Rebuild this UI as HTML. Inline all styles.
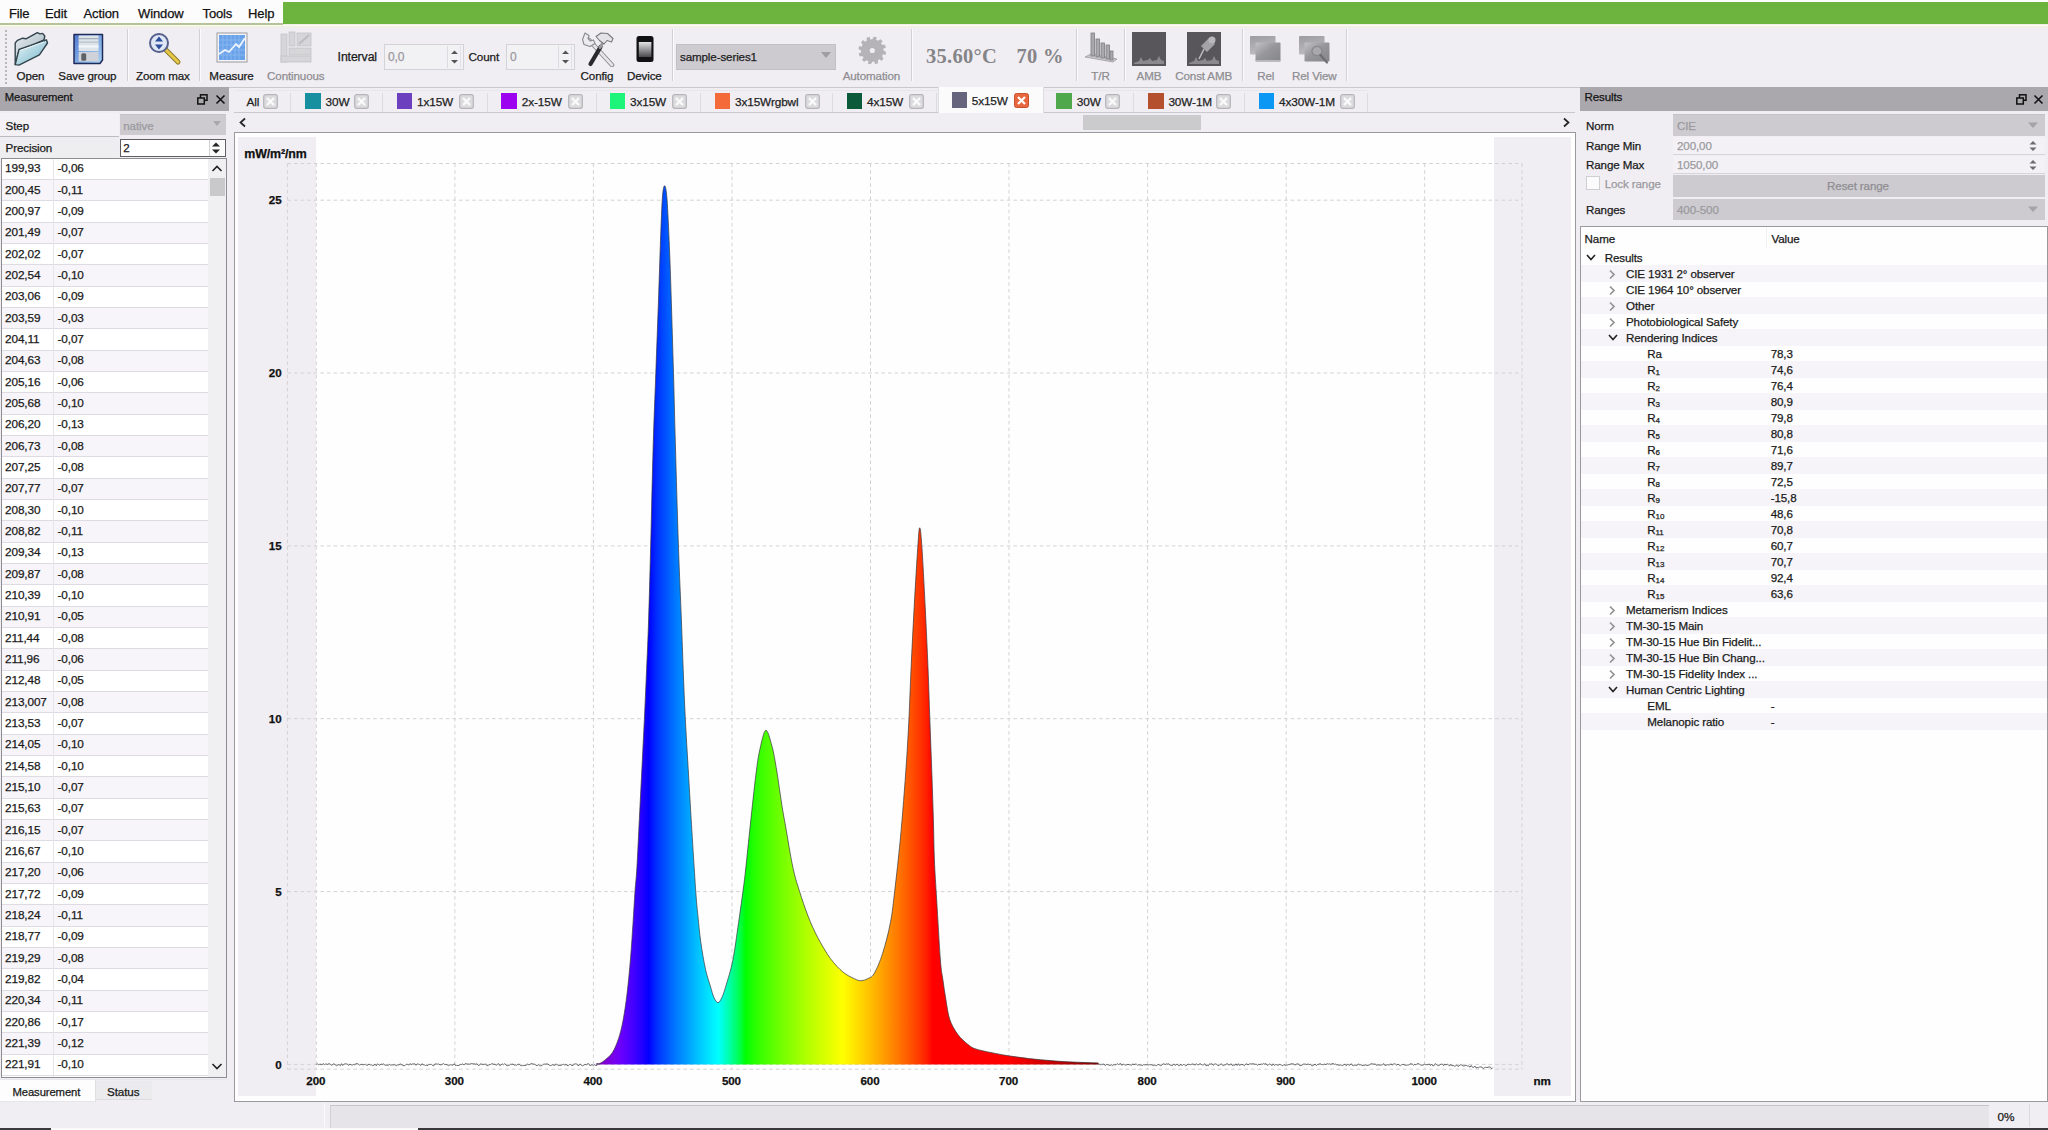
<!DOCTYPE html><html><head><meta charset="utf-8"><style>
*{box-sizing:border-box}
body{margin:0;width:2048px;height:1130px;overflow:hidden;position:relative;background:#f0eef3;font-family:"Liberation Sans",sans-serif;font-size:12px;color:#1a1a1a}
.a{position:absolute}
.t{position:absolute;white-space:nowrap;line-height:1;-webkit-text-stroke:0.25px currentColor;letter-spacing:-0.12px}
.g{color:#8a898c}
</style></head><body>

<div class="a" style="left:0px;top:0px;width:2048px;height:23px;background:#fcfcfc"></div>
<div class="a" style="left:0px;top:23px;width:283px;height:1.5px;background:#b4c39a"></div>
<div class="a" style="left:283px;top:2px;width:1765px;height:22.3px;background:#6db43e"></div>
<div class="a" style="left:0px;top:24.5px;width:2048px;height:1.5px;background:#fbfbe6"></div>
<div class="a" style="left:0px;top:26px;width:2048px;height:2px;background:#f1f0e8"></div>
<div class="t" style="left:9px;top:6.5px;font-size:13px;color:#111">File</div>
<div class="t" style="left:45px;top:6.5px;font-size:13px;color:#111">Edit</div>
<div class="t" style="left:83.5px;top:6.5px;font-size:13px;color:#111">Action</div>
<div class="t" style="left:138px;top:6.5px;font-size:13px;color:#111">Window</div>
<div class="t" style="left:202.5px;top:6.5px;font-size:13px;color:#111">Tools</div>
<div class="t" style="left:248px;top:6.5px;font-size:13px;color:#111">Help</div>
<div class="a" style="left:0px;top:87px;width:2048px;height:1px;background:#c9c8cb"></div>
<div class="a" style="left:127px;top:29px;width:1px;height:52px;background:#d3d1d6"></div>
<div class="a" style="left:128px;top:29px;width:1px;height:52px;background:#fbfafc"></div>
<div class="a" style="left:199px;top:29px;width:1px;height:52px;background:#d3d1d6"></div>
<div class="a" style="left:200px;top:29px;width:1px;height:52px;background:#fbfafc"></div>
<div class="a" style="left:672px;top:29px;width:1px;height:52px;background:#d3d1d6"></div>
<div class="a" style="left:673px;top:29px;width:1px;height:52px;background:#fbfafc"></div>
<div class="a" style="left:911px;top:29px;width:1px;height:52px;background:#d3d1d6"></div>
<div class="a" style="left:912px;top:29px;width:1px;height:52px;background:#fbfafc"></div>
<div class="a" style="left:1076px;top:29px;width:1px;height:52px;background:#d3d1d6"></div>
<div class="a" style="left:1077px;top:29px;width:1px;height:52px;background:#fbfafc"></div>
<div class="a" style="left:1124px;top:29px;width:1px;height:52px;background:#d3d1d6"></div>
<div class="a" style="left:1125px;top:29px;width:1px;height:52px;background:#fbfafc"></div>
<div class="a" style="left:1242px;top:29px;width:1px;height:52px;background:#d3d1d6"></div>
<div class="a" style="left:1243px;top:29px;width:1px;height:52px;background:#fbfafc"></div>
<div class="a" style="left:1346px;top:29px;width:1px;height:52px;background:#d3d1d6"></div>
<div class="a" style="left:1347px;top:29px;width:1px;height:52px;background:#fbfafc"></div>
<div class="a" style="left:5px;top:30px;width:1.5px;height:2px;background:#b8b7ba"></div>
<div class="a" style="left:5px;top:34px;width:1.5px;height:2px;background:#b8b7ba"></div>
<div class="a" style="left:5px;top:38px;width:1.5px;height:2px;background:#b8b7ba"></div>
<div class="a" style="left:5px;top:42px;width:1.5px;height:2px;background:#b8b7ba"></div>
<div class="a" style="left:5px;top:46px;width:1.5px;height:2px;background:#b8b7ba"></div>
<div class="a" style="left:5px;top:50px;width:1.5px;height:2px;background:#b8b7ba"></div>
<div class="a" style="left:5px;top:54px;width:1.5px;height:2px;background:#b8b7ba"></div>
<div class="a" style="left:5px;top:58px;width:1.5px;height:2px;background:#b8b7ba"></div>
<div class="a" style="left:5px;top:62px;width:1.5px;height:2px;background:#b8b7ba"></div>
<div class="a" style="left:5px;top:66px;width:1.5px;height:2px;background:#b8b7ba"></div>
<div class="a" style="left:5px;top:70px;width:1.5px;height:2px;background:#b8b7ba"></div>
<div class="a" style="left:5px;top:74px;width:1.5px;height:2px;background:#b8b7ba"></div>
<div class="a" style="left:5px;top:78px;width:1.5px;height:2px;background:#b8b7ba"></div>
<div class="a" style="left:5px;top:82px;width:1.5px;height:2px;background:#b8b7ba"></div>
<svg class="a" style="left:13px;top:31px" width="38" height="37" viewBox="0 0 38 37"><defs><linearGradient id="fb" x1="0" y1="0" x2="1" y2="1"><stop offset="0" stop-color="#e4ebef"/><stop offset="1" stop-color="#9fb2bb"/></linearGradient>
<linearGradient id="ff" x1="0" y1="0" x2="1" y2="1"><stop offset="0" stop-color="#f2f8fa"/><stop offset="0.55" stop-color="#a9d3df"/><stop offset="1" stop-color="#7fb0c2"/></linearGradient></defs>
<path d="M2.2 33.6 L2.2 12 L4.4 9.4 L9.7 7.2 L13 7.8 L24.3 1.6 L27 2.9 L29.6 2.4 L31.8 5 L31 9 L20 14 L6 20 Z" fill="url(#fb)" stroke="#34444c" stroke-width="1.4" stroke-linejoin="round"/>
<path d="M2.2 33.6 L6 18.5 L33.4 8.8 L34.5 12 L26.4 23.9 L6 34.1 Z" fill="url(#ff)" stroke="#34444c" stroke-width="1.4" stroke-linejoin="round"/>
<path d="M7 19.5 L31 11" stroke="#ffffff" stroke-width="1" opacity="0.8"/></svg>
<div class="t" style="left:30.5px;top:69.78px;font-size:11.6px;transform:translateX(-50%);">Open</div>
<svg class="a" style="left:73px;top:33px" width="32" height="32" viewBox="0 0 32 32"><defs><linearGradient id="fl" x1="0" y1="0" x2="1" y2="1"><stop offset="0" stop-color="#4f78d0"/><stop offset="1" stop-color="#a9d4f5"/></linearGradient></defs>
<path d="M1 1.5 H29.5 V27 L27 30.5 H1 Z" fill="url(#fl)" stroke="#1f2c5a" stroke-width="1.5" stroke-linejoin="round"/>
<rect x="5.7" y="2.5" width="19.8" height="15.5" fill="#dde5ea"/><rect x="5.7" y="5" width="19.8" height="1.3" fill="#a3b0b8"/><rect x="5.7" y="8.5" width="19.8" height="1.3" fill="#b9c4cb"/><rect x="5.7" y="12.5" width="19.8" height="2" fill="#f4f8fb"/>
<rect x="5.7" y="18.9" width="19.8" height="9.5" fill="#cfd3d9"/><rect x="8.3" y="20.3" width="4.9" height="7.5" rx="1.5" fill="#5e6166"/></svg>
<div class="t" style="left:87.4px;top:69.78px;font-size:11.6px;transform:translateX(-50%);">Save group</div>
<svg class="a" style="left:148px;top:32px" width="34" height="34" viewBox="0 0 34 34"><line x1="18" y1="18" x2="30" y2="30" stroke="#8a7a2a" stroke-width="5" stroke-linecap="round"/><line x1="18" y1="18" x2="30" y2="30" stroke="#e8c84a" stroke-width="3" stroke-linecap="round"/>
<circle cx="11" cy="11" r="9" fill="#dfe6f5" stroke="#55608a" stroke-width="2"/><path d="M11 4.5 L15 9.5 H7 Z M11 17.5 L15 12.5 H7 Z" fill="#2b4c9a"/></svg>
<div class="t" style="left:162.9px;top:69.78px;font-size:11.6px;transform:translateX(-50%);">Zoom max</div>
<svg class="a" style="left:216px;top:32px" width="32" height="32" viewBox="0 0 32 32"><rect x="1" y="1" width="30" height="29" fill="#f4f4f6" stroke="#9a9aa0"/><rect x="3" y="3" width="26" height="25" fill="#6aa2ea"/>
<g stroke="#8dbaf0" stroke-width="0.8"><path d="M7 3V28M11 3V28M15 3V28M19 3V28M23 3V28M3 8H29M3 13H29M3 18H29M3 23H29"/></g>
<path d="M3 22 L9 18 L13 20 L20 12 L23 15 L29 6" fill="none" stroke="#eef4ff" stroke-width="1.8"/></svg>
<div class="t" style="left:231.5px;top:69.78px;font-size:11.6px;transform:translateX(-50%);">Measure</div>
<svg class="a" style="left:279px;top:30px" width="36" height="34" viewBox="0 0 36 34"><g fill="#d6d5d8" stroke="#c4c3c6" stroke-width="0.8"><rect x="2" y="4" width="6" height="28"/><rect x="10" y="2" width="6" height="14"/><rect x="18" y="3" width="14" height="13"/><rect x="10" y="18" width="22" height="7"/><rect x="2" y="26" width="30" height="6"/></g>
<path d="M20 14 L30 5" stroke="#bdbcbf" stroke-width="2"/></svg>
<div class="t" style="left:295.8px;top:69.78px;font-size:11.6px;transform:translateX(-50%);color:#8e8d91">Continuous</div>
<div class="t" style="left:337.6px;top:50.59px;font-size:12.3px;">Interval</div>
<div class="a" style="left:384px;top:43.5px;width:80px;height:26px;background:#f2f1f4;border:1px solid #d3d2d6"></div>
<div class="a" style="left:447px;top:45.5px;width:14px;height:22px;border-left:1px solid #dcdbdf;border-right:1px solid #e2e1e5"></div>
<svg class="a" style="left:450px;top:47.5px" width="9" height="18" viewBox="0 0 9 18"><path d="M4.5 2.5 L8 6 H1 Z M4.5 15.5 L8 12 H1 Z" fill="#555"/></svg>
<div class="t" style="left:388px;top:50.64px;font-size:12px;color:#9a999d">0,0</div>
<div class="t" style="left:468.5px;top:51.10px;font-size:11.7px;">Count</div>
<div class="a" style="left:506px;top:43.5px;width:69px;height:26px;background:#f2f1f4;border:1px solid #d3d2d6"></div>
<div class="a" style="left:558px;top:45.5px;width:14px;height:22px;border-left:1px solid #dcdbdf;border-right:1px solid #e2e1e5"></div>
<svg class="a" style="left:561px;top:47.5px" width="9" height="18" viewBox="0 0 9 18"><path d="M4.5 2.5 L8 6 H1 Z M4.5 15.5 L8 12 H1 Z" fill="#555"/></svg>
<div class="t" style="left:510px;top:50.64px;font-size:12px;color:#9a999d">0</div>
<svg class="a" style="left:580px;top:31px" width="37" height="36" viewBox="0 0 37 36"><path d="M9 9 L32 34" stroke="#8e8e92" stroke-width="4.6" stroke-linecap="round"/><path d="M9 9 L32 34" stroke="#e6e6e8" stroke-width="2.6" stroke-linecap="round"/>
<path d="M2.5 8.5 L5 2 L9 4.5 L8 7.5 L10.5 10 L13.5 9 L15 12.5 L10 15.5 L4 13.5 Z" fill="#ececee" stroke="#8a8a8e" stroke-width="1.1" stroke-linejoin="round"/>
<path d="M20.5 16 L10.5 33" stroke="#2a2a2c" stroke-width="4.2" stroke-linecap="round"/><path d="M24 10 L20 16.5" stroke="#9a9a9e" stroke-width="3" stroke-linecap="round"/>
<path d="M16 5.5 L21 2 L27.5 2.5 L33 7.5 L31.5 11 L27 9.5 L24 13 L19.5 9.5 Z" fill="#e4e4e6" stroke="#7a7a7e" stroke-width="1.1" stroke-linejoin="round"/></svg>
<div class="t" style="left:597px;top:69.78px;font-size:11.6px;transform:translateX(-50%);">Config</div>
<svg class="a" style="left:636px;top:35px" width="19" height="28" viewBox="0 0 19 28"><defs><linearGradient id="ph" x1="0" y1="0" x2="0" y2="1"><stop offset="0" stop-color="#e2e2e4"/><stop offset="1" stop-color="#4a4a4e"/></linearGradient></defs><rect x="0.5" y="1" width="17" height="26" rx="2.5" fill="#111113"/><rect x="2.8" y="7" width="12.6" height="15" fill="url(#ph)"/></svg>
<div class="t" style="left:644.3px;top:69.78px;font-size:11.6px;transform:translateX(-50%);">Device</div>
<div class="a" style="left:676px;top:43.5px;width:160px;height:26px;background:#cdcbd0;border:1px solid #c1c0c3"></div>
<div class="t" style="left:680px;top:51.18px;font-size:11.6px;color:#222">sample-series1</div>
<svg class="a" style="left:820px;top:50px" width="12" height="10" viewBox="0 0 12 10"><path d="M1 2 L11 2 L6 8 Z" fill="#9e9da1"/></svg>
<svg class="a" style="left:857px;top:35px" width="31" height="31" viewBox="0 0 31 31"><polygon points="26.60,15.50 29.12,16.95 28.47,19.93 25.93,19.33 25.09,21.15 26.55,23.67 24.49,25.93 22.59,24.13 20.95,25.29 20.95,28.20 18.05,29.13 17.30,26.62 15.30,26.80 13.85,29.32 10.87,28.67 11.47,26.13 9.65,25.29 7.13,26.75 4.87,24.69 6.67,22.79 5.51,21.15 2.60,21.15 1.67,18.25 4.18,17.50 4.00,15.50 1.48,14.05 2.13,11.07 4.67,11.67 5.51,9.85 4.05,7.33 6.11,5.07 8.01,6.87 9.65,5.71 9.65,2.80 12.55,1.87 13.30,4.38 15.30,4.20 16.75,1.68 19.73,2.33 19.13,4.87 20.95,5.71 23.47,4.25 25.73,6.31 23.93,8.21 25.09,9.85 28.00,9.85 28.93,12.75 26.42,13.50" fill="#b5b3b8"/><circle cx="15.3" cy="15.5" r="2.6" fill="#f0eef3"/></svg>
<div class="t" style="left:871.4px;top:69.78px;font-size:11.6px;transform:translateX(-50%);color:#8e8d91">Automation</div>
<div class="t" style="left:926px;top:45.95px;font-size:20.5px;font-family:'Liberation Serif',serif;font-weight:bold;color:#858488;-webkit-text-stroke:0;letter-spacing:0.3px">35.60°C</div>
<div class="t" style="left:1016.5px;top:45.95px;font-size:20.5px;font-family:'Liberation Serif',serif;font-weight:bold;color:#858488;-webkit-text-stroke:0;letter-spacing:0.3px">70 %</div>
<svg class="a" style="left:1083px;top:31px" width="35" height="34" viewBox="0 0 35 34"><path d="M2 26 L30 31 L34 28 L8 23 Z" fill="#c9c8cb" stroke="#9c9b9e" stroke-width="0.8"/>
<g fill="#a9a8ab" stroke="#7d7c80" stroke-width="0.8"><rect x="8" y="2" width="3.5" height="23"/><rect x="13" y="8" width="3.5" height="18"/><rect x="18" y="12" width="3.5" height="15"/><rect x="23" y="14" width="3.5" height="14"/><rect x="27" y="20" width="3" height="9"/></g></svg>
<div class="t" style="left:1100.5px;top:69.78px;font-size:11.6px;transform:translateX(-50%);color:#8e8d91">T/R</div>
<svg class="a" style="left:1132px;top:32px" width="34" height="34" viewBox="0 0 34 34"><rect x="0" y="0" width="34" height="34" fill="#58565b"/><path d="M2 31 L7 29 L9 25 L11 29 L16 28 L18 26 L20 29 L25 28 L27 24 L29 28 L32 29 L32 32 L2 32 Z" fill="#8b898e"/></svg>
<div class="t" style="left:1149px;top:69.78px;font-size:11.6px;transform:translateX(-50%);color:#8e8d91">AMB</div>
<svg class="a" style="left:1187px;top:32px" width="34" height="34" viewBox="0 0 34 34"><rect x="0" y="0" width="34" height="34" fill="#58565b"/><path d="M2 31 L7 29 L9 25 L11 29 L16 28 L18 26 L20 29 L25 28 L27 24 L29 28 L32 29 L32 32 L2 32 Z" fill="#8b898e"/>
<path d="M12 27 L17 17" stroke="#bcbbbe" stroke-width="1.6"/><path d="M14 14 L22 6 L28 12 L20 20 Z" fill="#a3a2a6"/><circle cx="25" cy="8" r="3.5" fill="#b8b7ba"/></svg>
<div class="t" style="left:1203.7px;top:69.78px;font-size:11.6px;transform:translateX(-50%);color:#8e8d91">Const AMB</div>
<svg class="a" style="left:1249px;top:35px" width="33" height="29" viewBox="0 0 33 29"><defs><linearGradient id="rb" x1="0" y1="0" x2="0.3" y2="1"><stop offset="0" stop-color="#9c9b9f"/><stop offset="1" stop-color="#bcbbbf"/></linearGradient><linearGradient id="rf" x1="0" y1="0" x2="1" y2="1"><stop offset="0" stop-color="#c4c3c7"/><stop offset="0.45" stop-color="#98979b"/><stop offset="1" stop-color="#858488"/></linearGradient></defs><rect x="1" y="1" width="25.5" height="18.5" rx="1" fill="url(#rb)"/><rect x="6.5" y="7.5" width="25" height="19" rx="1" fill="url(#rf)"/><rect x="6.5" y="25" width="25" height="1.5" fill="#b9b8bc"/></svg>
<div class="t" style="left:1265.8px;top:69.78px;font-size:11.6px;transform:translateX(-50%);color:#8e8d91">Rel</div>
<svg class="a" style="left:1298px;top:35px" width="33" height="32" viewBox="0 0 33 32"><rect x="1" y="1" width="25.5" height="18.5" rx="1" fill="url(#rb)"/><rect x="6.5" y="7.5" width="25" height="19" rx="1" fill="url(#rf)"/><ellipse cx="19" cy="16" rx="5" ry="4.6" fill="#a9a8ac" stroke="#8a898d" stroke-width="1.3"/><path d="M22.5 20 L29 27.5" stroke="#6e6d71" stroke-width="2.2" stroke-linecap="round"/></svg>
<div class="t" style="left:1314.3px;top:69.78px;font-size:11.6px;transform:translateX(-50%);color:#8e8d91">Rel View</div>
<div class="a" style="left:0px;top:87px;width:229px;height:23.5px;background:#a9a7ac"></div>
<div class="t" style="left:4.8px;top:91.63px;font-size:11.3px;color:#151515">Measurement</div>
<svg class="a" style="left:197px;top:93.5px" width="11" height="11" viewBox="0 0 11 11"><rect x="3.5" y="0.8" width="6.5" height="5.5" fill="none" stroke="#111" stroke-width="1.5"/><rect x="0.8" y="4" width="6.5" height="6" fill="#aaa9ac" stroke="#111" stroke-width="1.5"/></svg>
<svg class="a" style="left:214.5px;top:93.5px" width="11" height="11" viewBox="0 0 11 11"><path d="M1.5 1.5 L9.5 9.5 M9.5 1.5 L1.5 9.5" stroke="#111" stroke-width="1.6"/></svg>
<div class="a" style="left:0px;top:112.5px;width:119px;height:24px;background:#f3f1f5;border-bottom:1.5px solid #bcbbbf"></div>
<div class="a" style="left:0px;top:136.5px;width:119px;height:21px;background:#eeedf0"></div>
<div class="t" style="left:5.6px;top:119.98px;font-size:11.6px;">Step</div>
<div class="a" style="left:119.6px;top:114.3px;width:106.5px;height:21.2px;background:#cdcbd0;border-top:1px solid #c4c2c8"></div>
<div class="t" style="left:123.3px;top:119.98px;font-size:11.6px;color:#9b9a9e">native</div>
<svg class="a" style="left:212px;top:120px" width="10" height="8" viewBox="0 0 10 8"><path d="M1 1 L9 1 L5 6 Z" fill="#a8a7aa"/></svg>
<div class="t" style="left:5.6px;top:141.98px;font-size:11.6px;">Precision</div>
<div class="a" style="left:119.6px;top:138.5px;width:106px;height:18.5px;background:#fff;border:1px solid #5f5e62"></div>
<div class="a" style="left:208.5px;top:140px;width:15.5px;height:15.5px;border-left:1px solid #d0cfd3;background:#fafafa"></div>
<svg class="a" style="left:210px;top:140px" width="12" height="16" viewBox="0 0 12 16"><path d="M6 2.5 L10 6.5 H2 Z M6 13.5 L10 9.5 H2 Z" fill="#222"/></svg>
<div class="t" style="left:123.3px;top:142.18px;font-size:11.6px;">2</div>
<div class="a" style="left:1px;top:158.3px;width:226px;height:920px;background:#fff;border:1px solid #8d8c90"></div>
<div class="a" style="left:2px;top:158.7px;width:206px;height:21.333px;background:#ffffff;border-bottom:1px solid #dedce2"></div>
<div class="t" style="left:5px;top:163.31px;font-size:11.8px;">199,93</div>
<div class="t" style="left:57.5px;top:163.31px;font-size:11.8px;">-0,06</div>
<div class="a" style="left:2px;top:180.033px;width:206px;height:21.333px;background:#f7f5f9;border-bottom:1px solid #dedce2"></div>
<div class="t" style="left:5px;top:184.64px;font-size:11.8px;">200,45</div>
<div class="t" style="left:57.5px;top:184.64px;font-size:11.8px;">-0,11</div>
<div class="a" style="left:2px;top:201.36599999999999px;width:206px;height:21.333px;background:#ffffff;border-bottom:1px solid #dedce2"></div>
<div class="t" style="left:5px;top:205.98px;font-size:11.8px;">200,97</div>
<div class="t" style="left:57.5px;top:205.98px;font-size:11.8px;">-0,09</div>
<div class="a" style="left:2px;top:222.69899999999998px;width:206px;height:21.333px;background:#f7f5f9;border-bottom:1px solid #dedce2"></div>
<div class="t" style="left:5px;top:227.31px;font-size:11.8px;">201,49</div>
<div class="t" style="left:57.5px;top:227.31px;font-size:11.8px;">-0,07</div>
<div class="a" style="left:2px;top:244.03199999999998px;width:206px;height:21.333px;background:#ffffff;border-bottom:1px solid #dedce2"></div>
<div class="t" style="left:5px;top:248.64px;font-size:11.8px;">202,02</div>
<div class="t" style="left:57.5px;top:248.64px;font-size:11.8px;">-0,07</div>
<div class="a" style="left:2px;top:265.365px;width:206px;height:21.333px;background:#f7f5f9;border-bottom:1px solid #dedce2"></div>
<div class="t" style="left:5px;top:269.98px;font-size:11.8px;">202,54</div>
<div class="t" style="left:57.5px;top:269.98px;font-size:11.8px;">-0,10</div>
<div class="a" style="left:2px;top:286.698px;width:206px;height:21.333px;background:#ffffff;border-bottom:1px solid #dedce2"></div>
<div class="t" style="left:5px;top:291.31px;font-size:11.8px;">203,06</div>
<div class="t" style="left:57.5px;top:291.31px;font-size:11.8px;">-0,09</div>
<div class="a" style="left:2px;top:308.03099999999995px;width:206px;height:21.333px;background:#f7f5f9;border-bottom:1px solid #dedce2"></div>
<div class="t" style="left:5px;top:312.64px;font-size:11.8px;">203,59</div>
<div class="t" style="left:57.5px;top:312.64px;font-size:11.8px;">-0,03</div>
<div class="a" style="left:2px;top:329.364px;width:206px;height:21.333px;background:#ffffff;border-bottom:1px solid #dedce2"></div>
<div class="t" style="left:5px;top:333.98px;font-size:11.8px;">204,11</div>
<div class="t" style="left:57.5px;top:333.98px;font-size:11.8px;">-0,07</div>
<div class="a" style="left:2px;top:350.697px;width:206px;height:21.333px;background:#f7f5f9;border-bottom:1px solid #dedce2"></div>
<div class="t" style="left:5px;top:355.31px;font-size:11.8px;">204,63</div>
<div class="t" style="left:57.5px;top:355.31px;font-size:11.8px;">-0,08</div>
<div class="a" style="left:2px;top:372.03px;width:206px;height:21.333px;background:#ffffff;border-bottom:1px solid #dedce2"></div>
<div class="t" style="left:5px;top:376.64px;font-size:11.8px;">205,16</div>
<div class="t" style="left:57.5px;top:376.64px;font-size:11.8px;">-0,06</div>
<div class="a" style="left:2px;top:393.36299999999994px;width:206px;height:21.333px;background:#f7f5f9;border-bottom:1px solid #dedce2"></div>
<div class="t" style="left:5px;top:397.97px;font-size:11.8px;">205,68</div>
<div class="t" style="left:57.5px;top:397.97px;font-size:11.8px;">-0,10</div>
<div class="a" style="left:2px;top:414.69599999999997px;width:206px;height:21.333px;background:#ffffff;border-bottom:1px solid #dedce2"></div>
<div class="t" style="left:5px;top:419.31px;font-size:11.8px;">206,20</div>
<div class="t" style="left:57.5px;top:419.31px;font-size:11.8px;">-0,13</div>
<div class="a" style="left:2px;top:436.02899999999994px;width:206px;height:21.333px;background:#f7f5f9;border-bottom:1px solid #dedce2"></div>
<div class="t" style="left:5px;top:440.64px;font-size:11.8px;">206,73</div>
<div class="t" style="left:57.5px;top:440.64px;font-size:11.8px;">-0,08</div>
<div class="a" style="left:2px;top:457.36199999999997px;width:206px;height:21.333px;background:#ffffff;border-bottom:1px solid #dedce2"></div>
<div class="t" style="left:5px;top:461.97px;font-size:11.8px;">207,25</div>
<div class="t" style="left:57.5px;top:461.97px;font-size:11.8px;">-0,08</div>
<div class="a" style="left:2px;top:478.695px;width:206px;height:21.333px;background:#f7f5f9;border-bottom:1px solid #dedce2"></div>
<div class="t" style="left:5px;top:483.31px;font-size:11.8px;">207,77</div>
<div class="t" style="left:57.5px;top:483.31px;font-size:11.8px;">-0,07</div>
<div class="a" style="left:2px;top:500.02799999999996px;width:206px;height:21.333px;background:#ffffff;border-bottom:1px solid #dedce2"></div>
<div class="t" style="left:5px;top:504.64px;font-size:11.8px;">208,30</div>
<div class="t" style="left:57.5px;top:504.64px;font-size:11.8px;">-0,10</div>
<div class="a" style="left:2px;top:521.3609999999999px;width:206px;height:21.333px;background:#f7f5f9;border-bottom:1px solid #dedce2"></div>
<div class="t" style="left:5px;top:525.97px;font-size:11.8px;">208,82</div>
<div class="t" style="left:57.5px;top:525.97px;font-size:11.8px;">-0,11</div>
<div class="a" style="left:2px;top:542.694px;width:206px;height:21.333px;background:#ffffff;border-bottom:1px solid #dedce2"></div>
<div class="t" style="left:5px;top:547.31px;font-size:11.8px;">209,34</div>
<div class="t" style="left:57.5px;top:547.31px;font-size:11.8px;">-0,13</div>
<div class="a" style="left:2px;top:564.027px;width:206px;height:21.333px;background:#f7f5f9;border-bottom:1px solid #dedce2"></div>
<div class="t" style="left:5px;top:568.64px;font-size:11.8px;">209,87</div>
<div class="t" style="left:57.5px;top:568.64px;font-size:11.8px;">-0,08</div>
<div class="a" style="left:2px;top:585.3599999999999px;width:206px;height:21.333px;background:#ffffff;border-bottom:1px solid #dedce2"></div>
<div class="t" style="left:5px;top:589.97px;font-size:11.8px;">210,39</div>
<div class="t" style="left:57.5px;top:589.97px;font-size:11.8px;">-0,10</div>
<div class="a" style="left:2px;top:606.693px;width:206px;height:21.333px;background:#f7f5f9;border-bottom:1px solid #dedce2"></div>
<div class="t" style="left:5px;top:611.30px;font-size:11.8px;">210,91</div>
<div class="t" style="left:57.5px;top:611.30px;font-size:11.8px;">-0,05</div>
<div class="a" style="left:2px;top:628.026px;width:206px;height:21.333px;background:#ffffff;border-bottom:1px solid #dedce2"></div>
<div class="t" style="left:5px;top:632.64px;font-size:11.8px;">211,44</div>
<div class="t" style="left:57.5px;top:632.64px;font-size:11.8px;">-0,08</div>
<div class="a" style="left:2px;top:649.3589999999999px;width:206px;height:21.333px;background:#f7f5f9;border-bottom:1px solid #dedce2"></div>
<div class="t" style="left:5px;top:653.97px;font-size:11.8px;">211,96</div>
<div class="t" style="left:57.5px;top:653.97px;font-size:11.8px;">-0,06</div>
<div class="a" style="left:2px;top:670.692px;width:206px;height:21.333px;background:#ffffff;border-bottom:1px solid #dedce2"></div>
<div class="t" style="left:5px;top:675.30px;font-size:11.8px;">212,48</div>
<div class="t" style="left:57.5px;top:675.30px;font-size:11.8px;">-0,05</div>
<div class="a" style="left:2px;top:692.0249999999999px;width:206px;height:21.333px;background:#f7f5f9;border-bottom:1px solid #dedce2"></div>
<div class="t" style="left:5px;top:696.64px;font-size:11.8px;">213,007</div>
<div class="t" style="left:57.5px;top:696.64px;font-size:11.8px;">-0,08</div>
<div class="a" style="left:2px;top:713.358px;width:206px;height:21.333px;background:#ffffff;border-bottom:1px solid #dedce2"></div>
<div class="t" style="left:5px;top:717.97px;font-size:11.8px;">213,53</div>
<div class="t" style="left:57.5px;top:717.97px;font-size:11.8px;">-0,07</div>
<div class="a" style="left:2px;top:734.691px;width:206px;height:21.333px;background:#f7f5f9;border-bottom:1px solid #dedce2"></div>
<div class="t" style="left:5px;top:739.30px;font-size:11.8px;">214,05</div>
<div class="t" style="left:57.5px;top:739.30px;font-size:11.8px;">-0,10</div>
<div class="a" style="left:2px;top:756.0239999999999px;width:206px;height:21.333px;background:#ffffff;border-bottom:1px solid #dedce2"></div>
<div class="t" style="left:5px;top:760.64px;font-size:11.8px;">214,58</div>
<div class="t" style="left:57.5px;top:760.64px;font-size:11.8px;">-0,10</div>
<div class="a" style="left:2px;top:777.357px;width:206px;height:21.333px;background:#f7f5f9;border-bottom:1px solid #dedce2"></div>
<div class="t" style="left:5px;top:781.97px;font-size:11.8px;">215,10</div>
<div class="t" style="left:57.5px;top:781.97px;font-size:11.8px;">-0,07</div>
<div class="a" style="left:2px;top:798.69px;width:206px;height:21.333px;background:#ffffff;border-bottom:1px solid #dedce2"></div>
<div class="t" style="left:5px;top:803.30px;font-size:11.8px;">215,63</div>
<div class="t" style="left:57.5px;top:803.30px;font-size:11.8px;">-0,07</div>
<div class="a" style="left:2px;top:820.0229999999999px;width:206px;height:21.333px;background:#f7f5f9;border-bottom:1px solid #dedce2"></div>
<div class="t" style="left:5px;top:824.63px;font-size:11.8px;">216,15</div>
<div class="t" style="left:57.5px;top:824.63px;font-size:11.8px;">-0,07</div>
<div class="a" style="left:2px;top:841.356px;width:206px;height:21.333px;background:#ffffff;border-bottom:1px solid #dedce2"></div>
<div class="t" style="left:5px;top:845.97px;font-size:11.8px;">216,67</div>
<div class="t" style="left:57.5px;top:845.97px;font-size:11.8px;">-0,10</div>
<div class="a" style="left:2px;top:862.6889999999999px;width:206px;height:21.333px;background:#f7f5f9;border-bottom:1px solid #dedce2"></div>
<div class="t" style="left:5px;top:867.30px;font-size:11.8px;">217,20</div>
<div class="t" style="left:57.5px;top:867.30px;font-size:11.8px;">-0,06</div>
<div class="a" style="left:2px;top:884.0219999999999px;width:206px;height:21.333px;background:#ffffff;border-bottom:1px solid #dedce2"></div>
<div class="t" style="left:5px;top:888.63px;font-size:11.8px;">217,72</div>
<div class="t" style="left:57.5px;top:888.63px;font-size:11.8px;">-0,09</div>
<div class="a" style="left:2px;top:905.355px;width:206px;height:21.333px;background:#f7f5f9;border-bottom:1px solid #dedce2"></div>
<div class="t" style="left:5px;top:909.97px;font-size:11.8px;">218,24</div>
<div class="t" style="left:57.5px;top:909.97px;font-size:11.8px;">-0,11</div>
<div class="a" style="left:2px;top:926.6879999999999px;width:206px;height:21.333px;background:#ffffff;border-bottom:1px solid #dedce2"></div>
<div class="t" style="left:5px;top:931.30px;font-size:11.8px;">218,77</div>
<div class="t" style="left:57.5px;top:931.30px;font-size:11.8px;">-0,09</div>
<div class="a" style="left:2px;top:948.021px;width:206px;height:21.333px;background:#f7f5f9;border-bottom:1px solid #dedce2"></div>
<div class="t" style="left:5px;top:952.63px;font-size:11.8px;">219,29</div>
<div class="t" style="left:57.5px;top:952.63px;font-size:11.8px;">-0,08</div>
<div class="a" style="left:2px;top:969.354px;width:206px;height:21.333px;background:#ffffff;border-bottom:1px solid #dedce2"></div>
<div class="t" style="left:5px;top:973.97px;font-size:11.8px;">219,82</div>
<div class="t" style="left:57.5px;top:973.97px;font-size:11.8px;">-0,04</div>
<div class="a" style="left:2px;top:990.6869999999999px;width:206px;height:21.333px;background:#f7f5f9;border-bottom:1px solid #dedce2"></div>
<div class="t" style="left:5px;top:995.30px;font-size:11.8px;">220,34</div>
<div class="t" style="left:57.5px;top:995.30px;font-size:11.8px;">-0,11</div>
<div class="a" style="left:2px;top:1012.02px;width:206px;height:21.333px;background:#ffffff;border-bottom:1px solid #dedce2"></div>
<div class="t" style="left:5px;top:1016.63px;font-size:11.8px;">220,86</div>
<div class="t" style="left:57.5px;top:1016.63px;font-size:11.8px;">-0,17</div>
<div class="a" style="left:2px;top:1033.3529999999998px;width:206px;height:21.333px;background:#f7f5f9;border-bottom:1px solid #dedce2"></div>
<div class="t" style="left:5px;top:1037.96px;font-size:11.8px;">221,39</div>
<div class="t" style="left:57.5px;top:1037.96px;font-size:11.8px;">-0,12</div>
<div class="a" style="left:2px;top:1054.686px;width:206px;height:21.333px;background:#ffffff;border-bottom:1px solid #dedce2"></div>
<div class="t" style="left:5px;top:1059.30px;font-size:11.8px;">221,91</div>
<div class="t" style="left:57.5px;top:1059.30px;font-size:11.8px;">-0,10</div>
<div class="a" style="left:53px;top:159px;width:1px;height:918px;background:#e6e5e9"></div>
<div class="a" style="left:208px;top:159.3px;width:18px;height:918px;background:#f0eff2"></div>
<svg class="a" style="left:211px;top:164px" width="12" height="9" viewBox="0 0 12 9"><path d="M1.5 7 L6 2.5 L10.5 7" fill="none" stroke="#222" stroke-width="1.6"/></svg>
<div class="a" style="left:209.5px;top:177.5px;width:15px;height:18px;background:#c9c8cb"></div>
<svg class="a" style="left:211px;top:1062px" width="12" height="9" viewBox="0 0 12 9"><path d="M1.5 2 L6 6.5 L10.5 2" fill="none" stroke="#222" stroke-width="1.6"/></svg>
<div class="a" style="left:0px;top:1079.5px;width:96px;height:22px;background:#fdfdfd;border-right:1px solid #e0dfe3;border-bottom:1px solid #e6e5e9"></div>
<div class="t" style="left:12.5px;top:1086.73px;font-size:11.3px;">Measurement</div>
<div class="a" style="left:96px;top:1081px;width:56px;height:19px;background:#ebeaed;border-bottom:1px solid #dddce0"></div>
<div class="t" style="left:107px;top:1086.30px;font-size:11.7px;">Status</div>
<div class="a" style="left:0px;top:1078.5px;width:228px;height:1px;background:#e8e7eb"></div>
<div class="a" style="left:234px;top:90px;width:1134px;height:22.5px;background:#f0eef3;border-top:1px solid #e8e6eb"></div>
<div class="a" style="left:234px;top:112px;width:1341px;height:1px;background:#c9c8cc"></div>
<div class="a" style="left:290.3px;top:93px;width:1px;height:19px;background:#dcdbdf"></div>
<div class="t" style="left:246.4px;top:97.21px;font-size:11.8px;color:#222">All</div>
<svg class="a" style="left:262.6px;top:93.8px" width="15" height="15" viewBox="0 0 15 15"><rect x="0.7" y="0.7" width="13.6" height="13.6" rx="2" fill="#dcdbde" stroke="#b5b4b8" stroke-width="1.2"/><path d="M4 4 L11 11 M11 4 L4 11" stroke="#fbfbfb" stroke-width="2.2"/></svg>
<div class="a" style="left:382px;top:93px;width:1px;height:19px;background:#dcdbdf"></div>
<div class="a" style="left:305.0px;top:93px;width:15.8px;height:15.8px;background:#16909f"></div>
<div class="t" style="left:325.5px;top:97.21px;font-size:11.8px;color:#222">30W</div>
<svg class="a" style="left:354.4px;top:93.8px" width="15" height="15" viewBox="0 0 15 15"><rect x="0.7" y="0.7" width="13.6" height="13.6" rx="2" fill="#dcdbde" stroke="#b5b4b8" stroke-width="1.2"/><path d="M4 4 L11 11 M11 4 L4 11" stroke="#fbfbfb" stroke-width="2.2"/></svg>
<div class="a" style="left:486.6px;top:93px;width:1px;height:19px;background:#dcdbdf"></div>
<div class="a" style="left:396.5px;top:93px;width:15.8px;height:15.8px;background:#6b3fbd"></div>
<div class="t" style="left:417px;top:97.21px;font-size:11.8px;color:#222">1x15W</div>
<svg class="a" style="left:459px;top:93.8px" width="15" height="15" viewBox="0 0 15 15"><rect x="0.7" y="0.7" width="13.6" height="13.6" rx="2" fill="#dcdbde" stroke="#b5b4b8" stroke-width="1.2"/><path d="M4 4 L11 11 M11 4 L4 11" stroke="#fbfbfb" stroke-width="2.2"/></svg>
<div class="a" style="left:596px;top:93px;width:1px;height:19px;background:#dcdbdf"></div>
<div class="a" style="left:501.29999999999995px;top:93px;width:15.8px;height:15.8px;background:#9c00ef"></div>
<div class="t" style="left:521.8px;top:97.21px;font-size:11.8px;color:#222">2x-15W</div>
<svg class="a" style="left:567.6px;top:93.8px" width="15" height="15" viewBox="0 0 15 15"><rect x="0.7" y="0.7" width="13.6" height="13.6" rx="2" fill="#dcdbde" stroke="#b5b4b8" stroke-width="1.2"/><path d="M4 4 L11 11 M11 4 L4 11" stroke="#fbfbfb" stroke-width="2.2"/></svg>
<div class="a" style="left:700.3px;top:93px;width:1px;height:19px;background:#dcdbdf"></div>
<div class="a" style="left:609.5px;top:93px;width:15.8px;height:15.8px;background:#1cf57a"></div>
<div class="t" style="left:630px;top:97.21px;font-size:11.8px;color:#222">3x15W</div>
<svg class="a" style="left:672px;top:93.8px" width="15" height="15" viewBox="0 0 15 15"><rect x="0.7" y="0.7" width="13.6" height="13.6" rx="2" fill="#dcdbde" stroke="#b5b4b8" stroke-width="1.2"/><path d="M4 4 L11 11 M11 4 L4 11" stroke="#fbfbfb" stroke-width="2.2"/></svg>
<div class="a" style="left:832px;top:93px;width:1px;height:19px;background:#dcdbdf"></div>
<div class="a" style="left:714.5px;top:93px;width:15.8px;height:15.8px;background:#f46a38"></div>
<div class="t" style="left:735px;top:97.21px;font-size:11.8px;color:#222">3x15Wrgbwl</div>
<svg class="a" style="left:804.5px;top:93.8px" width="15" height="15" viewBox="0 0 15 15"><rect x="0.7" y="0.7" width="13.6" height="13.6" rx="2" fill="#dcdbde" stroke="#b5b4b8" stroke-width="1.2"/><path d="M4 4 L11 11 M11 4 L4 11" stroke="#fbfbfb" stroke-width="2.2"/></svg>
<div class="a" style="left:936px;top:93px;width:1px;height:19px;background:#dcdbdf"></div>
<div class="a" style="left:846.5px;top:93px;width:15.8px;height:15.8px;background:#0b5b3a"></div>
<div class="t" style="left:867px;top:97.21px;font-size:11.8px;color:#222">4x15W</div>
<svg class="a" style="left:909px;top:93.8px" width="15" height="15" viewBox="0 0 15 15"><rect x="0.7" y="0.7" width="13.6" height="13.6" rx="2" fill="#dcdbde" stroke="#b5b4b8" stroke-width="1.2"/><path d="M4 4 L11 11 M11 4 L4 11" stroke="#fbfbfb" stroke-width="2.2"/></svg>
<div class="a" style="left:937.7px;top:87px;width:106.79999999999995px;height:26px;background:#fbfbfc;border-left:1px solid #dedde1;border-right:1px solid #dedde1"></div>
<div class="a" style="left:937.2px;top:92px;width:15.8px;height:15.5px;left:951.5px;background:#67657e"></div>
<div class="t" style="left:971.7px;top:96.31px;font-size:11.8px;color:#222">5x15W</div>
<svg class="a" style="left:1013.5px;top:93.2px" width="15" height="15" viewBox="0 0 15 15"><rect x="0.5" y="0.5" width="14" height="14" rx="2" fill="#e8673f" stroke="#c9532f"/><path d="M4 4 L11 11 M11 4 L4 11" stroke="#fff" stroke-width="2.2"/></svg>
<div class="a" style="left:1133.4px;top:93px;width:1px;height:19px;background:#dcdbdf"></div>
<div class="a" style="left:1056.3px;top:93px;width:15.8px;height:15.8px;background:#4fa84b"></div>
<div class="t" style="left:1076.8px;top:97.21px;font-size:11.8px;color:#222">30W</div>
<svg class="a" style="left:1105.3px;top:93.8px" width="15" height="15" viewBox="0 0 15 15"><rect x="0.7" y="0.7" width="13.6" height="13.6" rx="2" fill="#dcdbde" stroke="#b5b4b8" stroke-width="1.2"/><path d="M4 4 L11 11 M11 4 L4 11" stroke="#fbfbfb" stroke-width="2.2"/></svg>
<div class="a" style="left:1244.3px;top:93px;width:1px;height:19px;background:#dcdbdf"></div>
<div class="a" style="left:1147.9px;top:93px;width:15.8px;height:15.8px;background:#b4502e"></div>
<div class="t" style="left:1168.4px;top:97.21px;font-size:11.8px;color:#222">30W-1M</div>
<svg class="a" style="left:1216.3px;top:93.8px" width="15" height="15" viewBox="0 0 15 15"><rect x="0.7" y="0.7" width="13.6" height="13.6" rx="2" fill="#dcdbde" stroke="#b5b4b8" stroke-width="1.2"/><path d="M4 4 L11 11 M11 4 L4 11" stroke="#fbfbfb" stroke-width="2.2"/></svg>
<div class="a" style="left:1367.4px;top:93px;width:1px;height:19px;background:#dcdbdf"></div>
<div class="a" style="left:1258.5px;top:93px;width:15.8px;height:15.8px;background:#0b97f3"></div>
<div class="t" style="left:1279px;top:97.21px;font-size:11.8px;color:#222">4x30W-1M</div>
<svg class="a" style="left:1340px;top:93.8px" width="15" height="15" viewBox="0 0 15 15"><rect x="0.7" y="0.7" width="13.6" height="13.6" rx="2" fill="#dcdbde" stroke="#b5b4b8" stroke-width="1.2"/><path d="M4 4 L11 11 M11 4 L4 11" stroke="#fbfbfb" stroke-width="2.2"/></svg>
<svg class="a" style="left:238px;top:117px" width="9" height="11" viewBox="0 0 9 11"><path d="M7 1.5 L2.5 5.5 L7 9.5" fill="none" stroke="#222" stroke-width="1.7"/></svg>
<svg class="a" style="left:1562px;top:117px" width="9" height="11" viewBox="0 0 9 11"><path d="M2 1.5 L6.5 5.5 L2 9.5" fill="none" stroke="#222" stroke-width="1.7"/></svg>
<div class="a" style="left:1082.7px;top:115px;width:118px;height:15.3px;background:#cbcacc"></div>
<div class="a" style="left:234px;top:132px;width:1341.5px;height:969.5px;background:#fefefe;border:1px solid #9a999e"></div>
<div class="a" style="left:238.3px;top:136.5px;width:78px;height:959px;background:#f0eef3"></div>
<div class="a" style="left:1494px;top:136.5px;width:76.8px;height:959px;background:#f0eef3"></div>
<div class="a" style="left:1579.8px;top:87px;width:468.2px;height:23.5px;background:#aaa8ad"></div>
<div class="t" style="left:1584.4px;top:91.38px;font-size:11.6px;color:#151515">Results</div>
<svg class="a" style="left:2016.3px;top:93.5px" width="11" height="11" viewBox="0 0 11 11"><rect x="3.5" y="0.8" width="6.5" height="5.5" fill="none" stroke="#111" stroke-width="1.5"/><rect x="0.8" y="4" width="6.5" height="6" fill="#aaa9ac" stroke="#111" stroke-width="1.5"/></svg>
<svg class="a" style="left:2032.7px;top:93.5px" width="11" height="11" viewBox="0 0 11 11"><path d="M1.5 1.5 L9.5 9.5 M9.5 1.5 L1.5 9.5" stroke="#111" stroke-width="1.6"/></svg>
<div class="t" style="left:1586px;top:120.38px;font-size:11.6px;">Norm</div>
<div class="a" style="left:1673px;top:114.4px;width:372px;height:21.8px;background:#cdcbd0;border-top:1px solid #c3c2c5"></div>
<div class="t" style="left:1677px;top:120.38px;font-size:11.6px;color:#9b9a9e">CIE</div>
<svg class="a" style="left:2027px;top:121px" width="12" height="9" viewBox="0 0 12 9"><path d="M1 1.5 L11 1.5 L6 7 Z" fill="#a4a3a6"/></svg>
<div class="t" style="left:1586px;top:140.48px;font-size:11.6px;">Range Min</div>
<div class="a" style="left:1673px;top:137px;width:372px;height:17.5px;background:#f3f1f5;border-bottom:1px solid #d5d4d8"></div>
<div class="t" style="left:1677px;top:140.48px;font-size:11.6px;color:#9b9a9e">200,00</div>
<svg class="a" style="left:2027px;top:138px" width="12" height="16" viewBox="0 0 12 16"><path d="M6 3 L9.5 6.5 H2.5 Z M6 13 L9.5 9.5 H2.5 Z" fill="#6b6a6e"/></svg>
<div class="t" style="left:1586px;top:159.38px;font-size:11.6px;">Range Max</div>
<div class="a" style="left:1673px;top:155.5px;width:372px;height:18px;background:#f3f1f5;border-bottom:1px solid #d5d4d8"></div>
<div class="t" style="left:1677px;top:159.38px;font-size:11.6px;color:#9b9a9e">1050,00</div>
<svg class="a" style="left:2027px;top:157px" width="12" height="16" viewBox="0 0 12 16"><path d="M6 3 L9.5 6.5 H2.5 Z M6 13 L9.5 9.5 H2.5 Z" fill="#6b6a6e"/></svg>
<div class="a" style="left:1586px;top:176px;width:13.5px;height:14px;background:#fbfbfc;border:1px solid #cfced2"></div>
<div class="t" style="left:1604.7px;top:177.78px;font-size:11.6px;color:#9b9a9e">Lock range</div>
<div class="a" style="left:1673px;top:175px;width:372px;height:22px;background:#cdcbd0"></div>
<div class="t" style="left:1858px;top:180.48px;font-size:11.6px;transform:translateX(-50%);color:#8f8e92">Reset range</div>
<div class="t" style="left:1586px;top:204.48px;font-size:11.6px;">Ranges</div>
<div class="a" style="left:1673px;top:199.3px;width:372px;height:20.7px;background:#cdcbd0"></div>
<div class="t" style="left:1677px;top:204.48px;font-size:11.6px;color:#9b9a9e">400-500</div>
<svg class="a" style="left:2027px;top:205px" width="12" height="9" viewBox="0 0 12 9"><path d="M1 1.5 L11 1.5 L6 7 Z" fill="#a4a3a6"/></svg>
<div class="a" style="left:1580px;top:225.8px;width:468px;height:876px;background:#fefefe;border:1px solid #9a999e"></div>
<div class="a" style="left:1766px;top:228px;width:1px;height:20px;background:#f0eff2"></div>
<div class="t" style="left:1584.6px;top:233.18px;font-size:11.6px;">Name</div>
<div class="t" style="left:1771.4px;top:233.18px;font-size:11.6px;">Value</div>
<svg class="a" style="left:1586px;top:253px" width="10" height="9" viewBox="0 0 10 9"><path d="M1 2 L5 6.5 L9 2" fill="none" stroke="#222" stroke-width="1.6"/></svg>
<div class="t" style="left:1604.7px;top:252.48px;font-size:11.6px;">Results</div>
<div class="a" style="left:1581px;top:265px;width:466px;height:16.5px;background:#f6f4f8"></div>
<svg class="a" style="left:1608px;top:269px" width="8" height="11" viewBox="0 0 8 11"><path d="M2 1.5 L6 5.5 L2 9.5" fill="none" stroke="#939296" stroke-width="1.7"/></svg>
<div class="t" style="left:1626px;top:268.48px;font-size:11.6px;">CIE 1931 2° observer</div>
<svg class="a" style="left:1608px;top:285px" width="8" height="11" viewBox="0 0 8 11"><path d="M2 1.5 L6 5.5 L2 9.5" fill="none" stroke="#939296" stroke-width="1.7"/></svg>
<div class="t" style="left:1626px;top:284.48px;font-size:11.6px;">CIE 1964 10° observer</div>
<div class="a" style="left:1581px;top:297px;width:466px;height:16.5px;background:#f6f4f8"></div>
<svg class="a" style="left:1608px;top:301px" width="8" height="11" viewBox="0 0 8 11"><path d="M2 1.5 L6 5.5 L2 9.5" fill="none" stroke="#939296" stroke-width="1.7"/></svg>
<div class="t" style="left:1626px;top:300.48px;font-size:11.6px;">Other</div>
<svg class="a" style="left:1608px;top:317px" width="8" height="11" viewBox="0 0 8 11"><path d="M2 1.5 L6 5.5 L2 9.5" fill="none" stroke="#939296" stroke-width="1.7"/></svg>
<div class="t" style="left:1626px;top:316.48px;font-size:11.6px;">Photobiological Safety</div>
<div class="a" style="left:1581px;top:329px;width:466px;height:16.5px;background:#f6f4f8"></div>
<svg class="a" style="left:1608px;top:333px" width="10" height="9" viewBox="0 0 10 9"><path d="M1 2 L5 6.5 L9 2" fill="none" stroke="#222" stroke-width="1.6"/></svg>
<div class="t" style="left:1626px;top:332.48px;font-size:11.6px;">Rendering Indices</div>
<div class="t" style="left:1647.3px;top:348.48px;font-size:11.6px;">Ra</div>
<div class="t" style="left:1770.7px;top:348.48px;font-size:11.6px;">78,3</div>
<div class="a" style="left:1581px;top:361px;width:466px;height:16.5px;background:#f6f4f8"></div>
<div class="t" style="left:1647.3px;top:364.48px;font-size:11.6px;">R<span style="font-size:8px;vertical-align:-1px">1</span></div>
<div class="t" style="left:1770.7px;top:364.48px;font-size:11.6px;">74,6</div>
<div class="t" style="left:1647.3px;top:380.48px;font-size:11.6px;">R<span style="font-size:8px;vertical-align:-1px">2</span></div>
<div class="t" style="left:1770.7px;top:380.48px;font-size:11.6px;">76,4</div>
<div class="a" style="left:1581px;top:393px;width:466px;height:16.5px;background:#f6f4f8"></div>
<div class="t" style="left:1647.3px;top:396.48px;font-size:11.6px;">R<span style="font-size:8px;vertical-align:-1px">3</span></div>
<div class="t" style="left:1770.7px;top:396.48px;font-size:11.6px;">80,9</div>
<div class="t" style="left:1647.3px;top:412.48px;font-size:11.6px;">R<span style="font-size:8px;vertical-align:-1px">4</span></div>
<div class="t" style="left:1770.7px;top:412.48px;font-size:11.6px;">79,8</div>
<div class="a" style="left:1581px;top:425px;width:466px;height:16.5px;background:#f6f4f8"></div>
<div class="t" style="left:1647.3px;top:428.48px;font-size:11.6px;">R<span style="font-size:8px;vertical-align:-1px">5</span></div>
<div class="t" style="left:1770.7px;top:428.48px;font-size:11.6px;">80,8</div>
<div class="t" style="left:1647.3px;top:444.48px;font-size:11.6px;">R<span style="font-size:8px;vertical-align:-1px">6</span></div>
<div class="t" style="left:1770.7px;top:444.48px;font-size:11.6px;">71,6</div>
<div class="a" style="left:1581px;top:457px;width:466px;height:16.5px;background:#f6f4f8"></div>
<div class="t" style="left:1647.3px;top:460.48px;font-size:11.6px;">R<span style="font-size:8px;vertical-align:-1px">7</span></div>
<div class="t" style="left:1770.7px;top:460.48px;font-size:11.6px;">89,7</div>
<div class="t" style="left:1647.3px;top:476.48px;font-size:11.6px;">R<span style="font-size:8px;vertical-align:-1px">8</span></div>
<div class="t" style="left:1770.7px;top:476.48px;font-size:11.6px;">72,5</div>
<div class="a" style="left:1581px;top:489px;width:466px;height:16.5px;background:#f6f4f8"></div>
<div class="t" style="left:1647.3px;top:492.48px;font-size:11.6px;">R<span style="font-size:8px;vertical-align:-1px">9</span></div>
<div class="t" style="left:1770.7px;top:492.48px;font-size:11.6px;">-15,8</div>
<div class="t" style="left:1647.3px;top:508.48px;font-size:11.6px;">R<span style="font-size:8px;vertical-align:-1px">10</span></div>
<div class="t" style="left:1770.7px;top:508.48px;font-size:11.6px;">48,6</div>
<div class="a" style="left:1581px;top:521px;width:466px;height:16.5px;background:#f6f4f8"></div>
<div class="t" style="left:1647.3px;top:524.48px;font-size:11.6px;">R<span style="font-size:8px;vertical-align:-1px">11</span></div>
<div class="t" style="left:1770.7px;top:524.48px;font-size:11.6px;">70,8</div>
<div class="t" style="left:1647.3px;top:540.48px;font-size:11.6px;">R<span style="font-size:8px;vertical-align:-1px">12</span></div>
<div class="t" style="left:1770.7px;top:540.48px;font-size:11.6px;">60,7</div>
<div class="a" style="left:1581px;top:553px;width:466px;height:16.5px;background:#f6f4f8"></div>
<div class="t" style="left:1647.3px;top:556.48px;font-size:11.6px;">R<span style="font-size:8px;vertical-align:-1px">13</span></div>
<div class="t" style="left:1770.7px;top:556.48px;font-size:11.6px;">70,7</div>
<div class="t" style="left:1647.3px;top:572.48px;font-size:11.6px;">R<span style="font-size:8px;vertical-align:-1px">14</span></div>
<div class="t" style="left:1770.7px;top:572.48px;font-size:11.6px;">92,4</div>
<div class="a" style="left:1581px;top:585px;width:466px;height:16.5px;background:#f6f4f8"></div>
<div class="t" style="left:1647.3px;top:588.48px;font-size:11.6px;">R<span style="font-size:8px;vertical-align:-1px">15</span></div>
<div class="t" style="left:1770.7px;top:588.48px;font-size:11.6px;">63,6</div>
<svg class="a" style="left:1608px;top:605px" width="8" height="11" viewBox="0 0 8 11"><path d="M2 1.5 L6 5.5 L2 9.5" fill="none" stroke="#939296" stroke-width="1.7"/></svg>
<div class="t" style="left:1626px;top:604.48px;font-size:11.6px;">Metamerism Indices</div>
<div class="a" style="left:1581px;top:617px;width:466px;height:16.5px;background:#f6f4f8"></div>
<svg class="a" style="left:1608px;top:621px" width="8" height="11" viewBox="0 0 8 11"><path d="M2 1.5 L6 5.5 L2 9.5" fill="none" stroke="#939296" stroke-width="1.7"/></svg>
<div class="t" style="left:1626px;top:620.48px;font-size:11.6px;">TM-30-15 Main</div>
<svg class="a" style="left:1608px;top:637px" width="8" height="11" viewBox="0 0 8 11"><path d="M2 1.5 L6 5.5 L2 9.5" fill="none" stroke="#939296" stroke-width="1.7"/></svg>
<div class="t" style="left:1626px;top:636.48px;font-size:11.6px;">TM-30-15 Hue Bin Fidelit...</div>
<div class="a" style="left:1581px;top:649px;width:466px;height:16.5px;background:#f6f4f8"></div>
<svg class="a" style="left:1608px;top:653px" width="8" height="11" viewBox="0 0 8 11"><path d="M2 1.5 L6 5.5 L2 9.5" fill="none" stroke="#939296" stroke-width="1.7"/></svg>
<div class="t" style="left:1626px;top:652.48px;font-size:11.6px;">TM-30-15 Hue Bin Chang...</div>
<svg class="a" style="left:1608px;top:669px" width="8" height="11" viewBox="0 0 8 11"><path d="M2 1.5 L6 5.5 L2 9.5" fill="none" stroke="#939296" stroke-width="1.7"/></svg>
<div class="t" style="left:1626px;top:668.48px;font-size:11.6px;">TM-30-15 Fidelity Index ...</div>
<div class="a" style="left:1581px;top:681px;width:466px;height:16.5px;background:#f6f4f8"></div>
<svg class="a" style="left:1608px;top:685px" width="10" height="9" viewBox="0 0 10 9"><path d="M1 2 L5 6.5 L9 2" fill="none" stroke="#222" stroke-width="1.6"/></svg>
<div class="t" style="left:1626px;top:684.48px;font-size:11.6px;">Human Centric Lighting</div>
<div class="t" style="left:1647.3px;top:700.48px;font-size:11.6px;">EML</div>
<div class="t" style="left:1770.7px;top:700.48px;font-size:11.6px;">-</div>
<div class="a" style="left:1581px;top:713px;width:466px;height:16.5px;background:#f6f4f8"></div>
<div class="t" style="left:1647.3px;top:716.48px;font-size:11.6px;">Melanopic ratio</div>
<div class="t" style="left:1770.7px;top:716.48px;font-size:11.6px;">-</div>
<div class="a" style="left:323.5px;top:1103px;width:1px;height:24px;background:#d5d4d8;border-right:1px solid #fafafa"></div>
<div class="a" style="left:329.5px;top:1105.3px;width:1659px;height:22.7px;background:#e6e4e8;border-top:1.5px solid #c6c5c9;border-left:1px solid #d0cfd3"></div>
<div class="t" style="left:1997.5px;top:1111.71px;font-size:11.8px;">0%</div>
<div class="a" style="left:2028.5px;top:1104px;width:1px;height:23px;background:#dad9dd"></div>
<div class="a" style="left:0px;top:1128px;width:51px;height:2px;background:#3c3a3e"></div>
<div class="a" style="left:51px;top:1128px;width:367px;height:2px;background:#fafafa"></div>
<div class="a" style="left:418px;top:1128px;width:1630px;height:2px;background:#3a383c"></div>
<svg class="a" style="left:0;top:0" width="2048" height="1130" viewBox="0 0 2048 1130"><defs><linearGradient id="spec" gradientUnits="userSpaceOnUse" x1="579.5" y1="0" x2="1147.6" y2="0"><stop offset="0.0000" stop-color="#79008d"/><stop offset="0.0122" stop-color="#8000a1"/><stop offset="0.0244" stop-color="#8300b5"/><stop offset="0.0366" stop-color="#8200c8"/><stop offset="0.0488" stop-color="#7e00db"/><stop offset="0.0610" stop-color="#7600ed"/><stop offset="0.0732" stop-color="#6a00ff"/><stop offset="0.0854" stop-color="#5400ff"/><stop offset="0.0976" stop-color="#3d00ff"/><stop offset="0.1098" stop-color="#2300ff"/><stop offset="0.1220" stop-color="#0000ff"/><stop offset="0.1341" stop-color="#0028ff"/><stop offset="0.1463" stop-color="#0046ff"/><stop offset="0.1585" stop-color="#0061ff"/><stop offset="0.1707" stop-color="#007bff"/><stop offset="0.1829" stop-color="#0092ff"/><stop offset="0.1951" stop-color="#00a9ff"/><stop offset="0.2073" stop-color="#00c0ff"/><stop offset="0.2195" stop-color="#00d5ff"/><stop offset="0.2317" stop-color="#00eaff"/><stop offset="0.2439" stop-color="#00ffff"/><stop offset="0.2561" stop-color="#00ffcb"/><stop offset="0.2683" stop-color="#00ff92"/><stop offset="0.2805" stop-color="#00ff54"/><stop offset="0.2927" stop-color="#00ff00"/><stop offset="0.3049" stop-color="#1fff00"/><stop offset="0.3171" stop-color="#36ff00"/><stop offset="0.3293" stop-color="#4aff00"/><stop offset="0.3415" stop-color="#5eff00"/><stop offset="0.3537" stop-color="#70ff00"/><stop offset="0.3659" stop-color="#81ff00"/><stop offset="0.3780" stop-color="#92ff00"/><stop offset="0.3902" stop-color="#a3ff00"/><stop offset="0.4024" stop-color="#b3ff00"/><stop offset="0.4146" stop-color="#c3ff00"/><stop offset="0.4268" stop-color="#d2ff00"/><stop offset="0.4390" stop-color="#e1ff00"/><stop offset="0.4512" stop-color="#f0ff00"/><stop offset="0.4634" stop-color="#ffff00"/><stop offset="0.4756" stop-color="#ffef00"/><stop offset="0.4878" stop-color="#ffdf00"/><stop offset="0.5000" stop-color="#ffcf00"/><stop offset="0.5122" stop-color="#ffbe00"/><stop offset="0.5244" stop-color="#ffad00"/><stop offset="0.5366" stop-color="#ff9b00"/><stop offset="0.5488" stop-color="#ff8900"/><stop offset="0.5610" stop-color="#ff7700"/><stop offset="0.5732" stop-color="#ff6300"/><stop offset="0.5854" stop-color="#ff4f00"/><stop offset="0.5976" stop-color="#ff3900"/><stop offset="0.6098" stop-color="#ff2100"/><stop offset="0.6220" stop-color="#ff0000"/><stop offset="0.6341" stop-color="#ff0000"/><stop offset="0.6463" stop-color="#ff0000"/><stop offset="0.6585" stop-color="#ff0000"/><stop offset="0.6707" stop-color="#ff0000"/><stop offset="0.6829" stop-color="#ff0000"/><stop offset="0.6951" stop-color="#ff0000"/><stop offset="0.7073" stop-color="#ff0000"/><stop offset="0.7195" stop-color="#ff0000"/><stop offset="0.7317" stop-color="#ff0000"/><stop offset="0.7439" stop-color="#ff0000"/><stop offset="0.7561" stop-color="#ff0000"/><stop offset="0.7683" stop-color="#f60000"/><stop offset="0.7805" stop-color="#ed0000"/><stop offset="0.7927" stop-color="#e40000"/><stop offset="0.8049" stop-color="#db0000"/><stop offset="0.8171" stop-color="#d10000"/><stop offset="0.8293" stop-color="#c80000"/><stop offset="0.8415" stop-color="#be0000"/><stop offset="0.8537" stop-color="#b50000"/><stop offset="0.8659" stop-color="#ab0000"/><stop offset="0.8780" stop-color="#a10000"/><stop offset="0.8902" stop-color="#970000"/><stop offset="0.9024" stop-color="#8d0000"/><stop offset="0.9146" stop-color="#820000"/><stop offset="0.9268" stop-color="#770000"/><stop offset="0.9390" stop-color="#6d0000"/><stop offset="0.9512" stop-color="#610000"/><stop offset="0.9634" stop-color="#610000"/><stop offset="0.9756" stop-color="#610000"/><stop offset="0.9878" stop-color="#610000"/><stop offset="1.0000" stop-color="#610000"/></linearGradient></defs>
<g stroke="#d3d1d5" stroke-width="1" stroke-dasharray="3.6 3" fill="none"><path d="M287.4 163.5 V1069.2"/><path d="M316.3 163.5 V1069.2"/><path d="M454.9 163.5 V1069.2"/><path d="M593.4 163.5 V1069.2"/><path d="M732.0 163.5 V1069.2"/><path d="M870.5 163.5 V1069.2"/><path d="M1009.0 163.5 V1069.2"/><path d="M1147.6 163.5 V1069.2"/><path d="M1286.2 163.5 V1069.2"/><path d="M1424.7 163.5 V1069.2"/><path d="M1522.0 163.5 V1069.2"/><path d="M287.4 163.5 H1522"/><path d="M287.4 200.2 H1522"/><path d="M287.4 373.0 H1522"/><path d="M287.4 545.9 H1522"/><path d="M287.4 718.7 H1522"/><path d="M287.4 891.6 H1522"/><path d="M287.4 1064.4 H1522"/><path d="M287.4 1069.2 H1522"/></g>
<path d="M596,1064.40 L596.00,1063.90 C596.67,1063.80 598.45,1064.00 600.00,1063.30 C601.55,1062.60 603.23,1061.48 605.30,1059.70 C607.37,1057.92 610.18,1056.15 612.40,1052.60 C614.62,1049.05 616.83,1043.72 618.60,1038.40 C620.37,1033.08 621.60,1028.08 623.00,1020.70 C624.40,1013.32 625.75,1004.43 627.00,994.10 C628.25,983.77 629.50,970.52 630.50,958.70 C631.50,946.88 632.25,934.43 633.00,923.20 C633.75,911.97 634.35,900.53 635.00,891.30 C635.65,882.07 636.17,879.98 636.90,867.80 C637.63,855.62 638.57,834.72 639.40,818.20 C640.23,801.68 641.07,785.22 641.90,768.70 C642.73,752.18 643.62,735.62 644.40,719.10 C645.18,702.58 645.90,686.12 646.60,669.60 C647.30,653.08 647.92,640.73 648.60,620.00 C649.28,599.27 649.93,574.37 650.70,545.20 C651.47,516.03 652.35,473.65 653.20,445.00 C654.05,416.35 654.88,398.40 655.80,373.30 C656.72,348.20 657.95,315.50 658.70,294.40 C659.45,273.30 659.70,262.62 660.30,246.70 C660.90,230.78 661.58,209.05 662.30,198.90 C663.02,188.75 663.82,185.80 664.60,185.80 C665.38,185.80 666.20,188.75 667.00,198.90 C667.80,209.05 668.72,230.78 669.40,246.70 C670.08,262.62 670.42,273.30 671.10,294.40 C671.78,315.50 672.78,348.20 673.50,373.30 C674.22,398.40 674.58,416.35 675.40,445.00 C676.22,473.65 677.40,516.03 678.40,545.20 C679.40,574.37 680.60,599.27 681.40,620.00 C682.20,640.73 682.55,653.08 683.20,669.60 C683.85,686.12 684.47,702.58 685.30,719.10 C686.13,735.62 687.23,752.18 688.20,768.70 C689.17,785.22 690.10,801.68 691.10,818.20 C692.10,834.72 693.38,855.00 694.20,867.80 C695.02,880.60 695.40,887.15 696.00,895.00 C696.60,902.85 697.00,907.02 697.80,914.90 C698.60,922.78 699.50,933.17 700.80,942.30 C702.10,951.43 704.00,962.38 705.60,969.70 C707.20,977.02 709.03,981.62 710.40,986.20 C711.77,990.78 712.53,994.45 713.80,997.20 C715.07,999.95 716.63,1002.70 718.00,1002.70 C719.37,1002.70 720.65,1000.12 722.00,997.20 C723.35,994.28 724.30,991.33 726.10,985.20 C727.90,979.07 730.73,970.73 732.80,960.40 C734.87,950.07 736.80,934.77 738.50,923.20 C740.20,911.63 741.82,899.87 743.00,891.00 C744.18,882.13 744.37,881.15 745.60,870.00 C746.83,858.85 748.68,840.00 750.40,824.10 C752.12,808.20 754.33,786.98 755.90,774.60 C757.47,762.22 758.15,757.18 759.80,749.80 C761.45,742.42 763.77,730.90 765.80,730.30 C767.83,729.70 770.27,740.00 772.00,746.20 C773.73,752.40 774.97,760.42 776.20,767.50 C777.43,774.58 778.33,781.63 779.40,788.70 C780.47,795.77 781.43,802.83 782.60,809.90 C783.77,816.97 785.17,824.02 786.40,831.10 C787.63,838.18 788.68,845.32 790.00,852.40 C791.32,859.48 792.70,867.07 794.30,873.60 C795.90,880.13 797.32,884.53 799.60,891.60 C801.88,898.67 805.00,908.38 808.00,916.00 C811.00,923.62 813.87,930.22 817.60,937.30 C821.33,944.38 826.17,952.70 830.40,958.50 C834.63,964.30 839.02,968.73 843.00,972.10 C846.98,975.47 851.30,977.27 854.30,978.70 C857.30,980.13 858.78,980.70 861.00,980.70 C863.22,980.70 865.42,979.87 867.60,978.70 C869.78,977.53 871.60,977.92 874.10,973.70 C876.60,969.48 879.88,961.88 882.60,953.40 C885.32,944.92 888.37,933.32 890.40,922.80 C892.43,912.28 893.18,903.87 894.80,890.30 C896.42,876.73 898.63,856.33 900.10,841.40 C901.57,826.47 902.52,814.27 903.60,800.70 C904.68,787.13 905.70,773.78 906.60,760.00 C907.50,746.22 908.25,733.38 909.00,718.00 C909.75,702.62 910.23,686.27 911.10,667.70 C911.97,649.13 913.07,626.97 914.20,606.60 C915.33,586.23 916.98,558.63 917.90,545.50 C918.82,532.37 919.05,527.80 919.70,527.80 C920.35,527.80 920.88,532.37 921.80,545.50 C922.72,558.63 924.17,586.23 925.20,606.60 C926.23,626.97 927.23,649.13 928.00,667.70 C928.77,686.27 929.15,700.20 929.80,718.00 C930.45,735.80 931.30,757.45 931.90,774.50 C932.50,791.55 932.98,806.05 933.40,820.30 C933.82,834.55 933.85,846.72 934.40,860.00 C934.95,873.28 935.70,883.33 936.70,900.00 C937.70,916.67 939.37,946.70 940.40,960.00 C941.43,973.30 941.98,973.20 942.90,979.80 C943.82,986.40 944.75,992.98 945.90,999.60 C947.05,1006.22 947.83,1013.72 949.80,1019.50 C951.77,1025.28 954.72,1030.18 957.70,1034.30 C960.68,1038.42 964.55,1041.72 967.70,1044.20 C970.85,1046.68 971.32,1047.53 976.60,1049.20 C981.88,1050.87 993.13,1052.97 999.40,1054.20 C1005.67,1055.43 1008.43,1055.78 1014.20,1056.60 C1019.97,1057.42 1025.73,1058.27 1034.00,1059.10 C1042.27,1059.93 1053.05,1060.95 1063.80,1061.60 C1074.55,1062.25 1092.72,1062.77 1098.50,1063.00 L1098.5,1064.40 Z" fill="url(#spec)"/>
<path d="M596.00,1063.90 C596.67,1063.80 598.45,1064.00 600.00,1063.30 C601.55,1062.60 603.23,1061.48 605.30,1059.70 C607.37,1057.92 610.18,1056.15 612.40,1052.60 C614.62,1049.05 616.83,1043.72 618.60,1038.40 C620.37,1033.08 621.60,1028.08 623.00,1020.70 C624.40,1013.32 625.75,1004.43 627.00,994.10 C628.25,983.77 629.50,970.52 630.50,958.70 C631.50,946.88 632.25,934.43 633.00,923.20 C633.75,911.97 634.35,900.53 635.00,891.30 C635.65,882.07 636.17,879.98 636.90,867.80 C637.63,855.62 638.57,834.72 639.40,818.20 C640.23,801.68 641.07,785.22 641.90,768.70 C642.73,752.18 643.62,735.62 644.40,719.10 C645.18,702.58 645.90,686.12 646.60,669.60 C647.30,653.08 647.92,640.73 648.60,620.00 C649.28,599.27 649.93,574.37 650.70,545.20 C651.47,516.03 652.35,473.65 653.20,445.00 C654.05,416.35 654.88,398.40 655.80,373.30 C656.72,348.20 657.95,315.50 658.70,294.40 C659.45,273.30 659.70,262.62 660.30,246.70 C660.90,230.78 661.58,209.05 662.30,198.90 C663.02,188.75 663.82,185.80 664.60,185.80 C665.38,185.80 666.20,188.75 667.00,198.90 C667.80,209.05 668.72,230.78 669.40,246.70 C670.08,262.62 670.42,273.30 671.10,294.40 C671.78,315.50 672.78,348.20 673.50,373.30 C674.22,398.40 674.58,416.35 675.40,445.00 C676.22,473.65 677.40,516.03 678.40,545.20 C679.40,574.37 680.60,599.27 681.40,620.00 C682.20,640.73 682.55,653.08 683.20,669.60 C683.85,686.12 684.47,702.58 685.30,719.10 C686.13,735.62 687.23,752.18 688.20,768.70 C689.17,785.22 690.10,801.68 691.10,818.20 C692.10,834.72 693.38,855.00 694.20,867.80 C695.02,880.60 695.40,887.15 696.00,895.00 C696.60,902.85 697.00,907.02 697.80,914.90 C698.60,922.78 699.50,933.17 700.80,942.30 C702.10,951.43 704.00,962.38 705.60,969.70 C707.20,977.02 709.03,981.62 710.40,986.20 C711.77,990.78 712.53,994.45 713.80,997.20 C715.07,999.95 716.63,1002.70 718.00,1002.70 C719.37,1002.70 720.65,1000.12 722.00,997.20 C723.35,994.28 724.30,991.33 726.10,985.20 C727.90,979.07 730.73,970.73 732.80,960.40 C734.87,950.07 736.80,934.77 738.50,923.20 C740.20,911.63 741.82,899.87 743.00,891.00 C744.18,882.13 744.37,881.15 745.60,870.00 C746.83,858.85 748.68,840.00 750.40,824.10 C752.12,808.20 754.33,786.98 755.90,774.60 C757.47,762.22 758.15,757.18 759.80,749.80 C761.45,742.42 763.77,730.90 765.80,730.30 C767.83,729.70 770.27,740.00 772.00,746.20 C773.73,752.40 774.97,760.42 776.20,767.50 C777.43,774.58 778.33,781.63 779.40,788.70 C780.47,795.77 781.43,802.83 782.60,809.90 C783.77,816.97 785.17,824.02 786.40,831.10 C787.63,838.18 788.68,845.32 790.00,852.40 C791.32,859.48 792.70,867.07 794.30,873.60 C795.90,880.13 797.32,884.53 799.60,891.60 C801.88,898.67 805.00,908.38 808.00,916.00 C811.00,923.62 813.87,930.22 817.60,937.30 C821.33,944.38 826.17,952.70 830.40,958.50 C834.63,964.30 839.02,968.73 843.00,972.10 C846.98,975.47 851.30,977.27 854.30,978.70 C857.30,980.13 858.78,980.70 861.00,980.70 C863.22,980.70 865.42,979.87 867.60,978.70 C869.78,977.53 871.60,977.92 874.10,973.70 C876.60,969.48 879.88,961.88 882.60,953.40 C885.32,944.92 888.37,933.32 890.40,922.80 C892.43,912.28 893.18,903.87 894.80,890.30 C896.42,876.73 898.63,856.33 900.10,841.40 C901.57,826.47 902.52,814.27 903.60,800.70 C904.68,787.13 905.70,773.78 906.60,760.00 C907.50,746.22 908.25,733.38 909.00,718.00 C909.75,702.62 910.23,686.27 911.10,667.70 C911.97,649.13 913.07,626.97 914.20,606.60 C915.33,586.23 916.98,558.63 917.90,545.50 C918.82,532.37 919.05,527.80 919.70,527.80 C920.35,527.80 920.88,532.37 921.80,545.50 C922.72,558.63 924.17,586.23 925.20,606.60 C926.23,626.97 927.23,649.13 928.00,667.70 C928.77,686.27 929.15,700.20 929.80,718.00 C930.45,735.80 931.30,757.45 931.90,774.50 C932.50,791.55 932.98,806.05 933.40,820.30 C933.82,834.55 933.85,846.72 934.40,860.00 C934.95,873.28 935.70,883.33 936.70,900.00 C937.70,916.67 939.37,946.70 940.40,960.00 C941.43,973.30 941.98,973.20 942.90,979.80 C943.82,986.40 944.75,992.98 945.90,999.60 C947.05,1006.22 947.83,1013.72 949.80,1019.50 C951.77,1025.28 954.72,1030.18 957.70,1034.30 C960.68,1038.42 964.55,1041.72 967.70,1044.20 C970.85,1046.68 971.32,1047.53 976.60,1049.20 C981.88,1050.87 993.13,1052.97 999.40,1054.20 C1005.67,1055.43 1008.43,1055.78 1014.20,1056.60 C1019.97,1057.42 1025.73,1058.27 1034.00,1059.10 C1042.27,1059.93 1053.05,1060.95 1063.80,1061.60 C1074.55,1062.25 1092.72,1062.77 1098.50,1063.00" fill="none" stroke="#38383e" stroke-opacity="0.7" stroke-width="1" stroke-linejoin="round"/>
<path d="M316.3,1064.3 L317.5,1063.9 L318.7,1065.0 L319.9,1063.8 L321.1,1064.8 L322.3,1064.4 L323.5,1063.7 L324.7,1064.7 L325.9,1063.7 L327.1,1064.6 L328.3,1063.8 L329.5,1063.8 L330.7,1064.5 L331.9,1065.4 L333.1,1063.9 L334.3,1064.1 L335.5,1065.0 L336.7,1065.7 L337.9,1064.9 L339.1,1064.5 L340.3,1065.7 L341.5,1063.7 L342.7,1065.5 L343.9,1064.2 L345.1,1063.9 L346.3,1063.9 L347.5,1064.3 L348.7,1065.4 L349.9,1064.0 L351.1,1064.9 L352.3,1065.0 L353.5,1064.4 L354.7,1064.8 L355.9,1063.7 L357.1,1063.7 L358.3,1064.1 L359.5,1065.1 L360.7,1064.5 L361.9,1064.3 L363.1,1064.9 L364.3,1064.6 L365.5,1064.3 L366.7,1065.3 L367.9,1065.1 L369.1,1064.1 L370.3,1064.9 L371.5,1064.8 L372.7,1065.5 L373.9,1065.2 L375.1,1064.2 L376.3,1065.8 L377.5,1063.9 L378.7,1064.5 L379.9,1065.3 L381.1,1063.9 L382.3,1064.7 L383.5,1063.7 L384.7,1065.1 L385.9,1065.3 L387.1,1064.9 L388.3,1065.5 L389.5,1064.3 L390.7,1065.1 L391.9,1064.9 L393.1,1064.9 L394.3,1064.6 L395.5,1065.4 L396.7,1065.7 L397.9,1064.6 L399.1,1065.1 L400.3,1063.7 L401.5,1065.1 L402.7,1065.0 L403.9,1065.8 L405.1,1065.4 L406.3,1064.2 L407.5,1064.4 L408.7,1065.1 L409.9,1063.6 L411.1,1064.6 L412.3,1064.0 L413.5,1063.9 L414.7,1063.7 L415.9,1065.3 L417.1,1063.9 L418.3,1064.1 L419.5,1064.5 L420.7,1065.5 L421.9,1063.8 L423.1,1064.6 L424.3,1064.8 L425.5,1065.5 L426.7,1065.4 L427.9,1065.5 L429.1,1064.2 L430.3,1064.5 L431.5,1064.4 L432.7,1065.5 L433.9,1065.7 L435.1,1063.9 L436.3,1064.0 L437.5,1064.1 L438.7,1064.1 L439.9,1064.7 L441.1,1064.9 L442.3,1064.2 L443.5,1063.6 L444.7,1064.5 L445.9,1064.4 L447.1,1064.8 L448.3,1065.7 L449.5,1065.1 L450.7,1064.7 L451.9,1065.0 L453.1,1065.1 L454.3,1063.7 L455.5,1065.6 L456.7,1065.3 L457.9,1065.5 L459.1,1065.4 L460.3,1064.5 L461.5,1064.5 L462.7,1063.8 L463.9,1065.0 L465.1,1063.7 L466.3,1063.7 L467.5,1064.1 L468.7,1064.0 L469.9,1064.3 L471.1,1063.7 L472.3,1063.6 L473.5,1063.9 L474.7,1063.8 L475.9,1064.4 L477.1,1063.7 L478.3,1065.5 L479.5,1065.0 L480.7,1063.9 L481.9,1064.2 L483.1,1064.4 L484.3,1064.4 L485.5,1063.9 L486.7,1065.5 L487.9,1065.8 L489.1,1064.6 L490.3,1064.7 L491.5,1063.8 L492.7,1063.8 L493.9,1064.4 L495.1,1064.2 L496.3,1065.4 L497.5,1064.0 L498.7,1063.7 L499.9,1065.7 L501.1,1064.8 L502.3,1063.9 L503.5,1064.8 L504.7,1063.7 L505.9,1064.8 L507.1,1065.8 L508.3,1065.5 L509.5,1065.1 L510.7,1064.2 L511.9,1064.4 L513.1,1064.0 L514.3,1065.3 L515.5,1064.8 L516.7,1065.3 L517.9,1064.3 L519.1,1064.1 L520.3,1065.4 L521.5,1065.8 L522.7,1065.5 L523.9,1065.4 L525.1,1065.4 L526.3,1065.2 L527.5,1064.1 L528.7,1064.7 L529.9,1064.4 L531.1,1063.7 L532.3,1063.7 L533.5,1064.2 L534.7,1064.2 L535.9,1065.1 L537.1,1065.7 L538.3,1064.6 L539.5,1065.7 L540.7,1065.8 L541.9,1065.7 L543.1,1064.4 L544.3,1064.1 L545.5,1064.1 L546.7,1064.0 L547.9,1064.0 L549.1,1065.0 L550.3,1065.6 L551.5,1065.4 L552.7,1064.7 L553.9,1065.0 L555.1,1065.4 L556.3,1063.8 L557.5,1065.1 L558.7,1065.6 L559.9,1065.3 L561.1,1065.3 L562.3,1064.7 L563.5,1064.0 L564.7,1065.3 L565.9,1064.3 L567.1,1065.4 L568.3,1065.7 L569.5,1064.5 L570.7,1064.5 L571.9,1065.7 L573.1,1065.2 L574.3,1064.0 L575.5,1063.9 L576.7,1063.9 L577.9,1065.6 L579.1,1065.4 L580.3,1063.9 L581.5,1065.4 L582.7,1065.8 L583.9,1065.0 L585.1,1064.4 L586.3,1064.8 L587.5,1063.9 L588.7,1063.6 L589.9,1065.7 L591.1,1065.0 L592.3,1064.8 L593.5,1065.7 L594.7,1064.6 L595.9,1065.5 L597.1,1065.4 L598.3,1064.1 L599.5,1064.2" fill="none" stroke="#66666a" stroke-width="1"/>
<path d="M1098.0,1064.2 L1099.2,1064.1 L1100.4,1064.9 L1101.6,1064.2 L1102.8,1064.5 L1104.0,1063.9 L1105.2,1065.6 L1106.4,1064.4 L1107.6,1064.6 L1108.8,1064.9 L1110.0,1065.6 L1111.2,1064.5 L1112.4,1065.6 L1113.6,1064.7 L1114.8,1064.8 L1116.0,1064.8 L1117.2,1063.6 L1118.4,1064.6 L1119.6,1064.0 L1120.8,1063.6 L1122.0,1065.4 L1123.2,1064.0 L1124.4,1064.6 L1125.6,1065.2 L1126.8,1064.8 L1128.0,1064.3 L1129.2,1064.7 L1130.4,1064.8 L1131.6,1065.3 L1132.8,1063.8 L1134.0,1064.8 L1135.2,1064.1 L1136.4,1064.2 L1137.6,1065.3 L1138.8,1064.7 L1140.0,1064.8 L1141.2,1065.3 L1142.4,1065.6 L1143.6,1064.6 L1144.8,1064.9 L1146.0,1064.7 L1147.2,1064.7 L1148.4,1065.1 L1149.6,1064.6 L1150.8,1064.8 L1152.0,1064.7 L1153.2,1065.7 L1154.4,1065.1 L1155.6,1065.5 L1156.8,1065.7 L1158.0,1064.2 L1159.2,1064.8 L1160.4,1065.7 L1161.6,1065.4 L1162.8,1063.9 L1164.0,1063.9 L1165.2,1064.6 L1166.4,1063.8 L1167.6,1064.1 L1168.8,1063.8 L1170.0,1065.1 L1171.2,1065.3 L1172.4,1065.6 L1173.6,1063.9 L1174.8,1065.2 L1176.0,1065.1 L1177.2,1063.9 L1178.4,1065.5 L1179.6,1065.7 L1180.8,1064.1 L1182.0,1065.7 L1183.2,1064.5 L1184.4,1064.7 L1185.6,1065.8 L1186.8,1065.4 L1188.0,1064.0 L1189.2,1064.5 L1190.4,1064.7 L1191.6,1064.3 L1192.8,1064.0 L1194.0,1064.3 L1195.2,1065.2 L1196.4,1063.6 L1197.6,1064.8 L1198.8,1064.6 L1200.0,1063.6 L1201.2,1064.3 L1202.4,1065.0 L1203.6,1064.7 L1204.8,1063.7 L1206.0,1065.8 L1207.2,1065.3 L1208.4,1065.7 L1209.6,1063.8 L1210.8,1064.2 L1212.0,1063.7 L1213.2,1065.3 L1214.4,1064.2 L1215.6,1063.9 L1216.8,1064.5 L1218.0,1065.6 L1219.2,1065.4 L1220.4,1064.2 L1221.6,1063.9 L1222.8,1065.6 L1224.0,1064.9 L1225.2,1065.1 L1226.4,1063.8 L1227.6,1063.7 L1228.8,1065.1 L1230.0,1064.5 L1231.2,1063.8 L1232.4,1065.7 L1233.6,1065.0 L1234.8,1065.4 L1236.0,1063.8 L1237.2,1065.5 L1238.4,1063.7 L1239.6,1065.5 L1240.8,1064.6 L1242.0,1064.3 L1243.2,1064.8 L1244.4,1065.6 L1245.6,1064.2 L1246.8,1063.9 L1248.0,1064.8 L1249.2,1064.1 L1250.4,1063.8 L1251.6,1064.0 L1252.8,1063.7 L1254.0,1064.0 L1255.2,1064.3 L1256.4,1064.3 L1257.6,1065.3 L1258.8,1064.2 L1260.0,1064.7 L1261.2,1064.0 L1262.4,1064.4 L1263.6,1063.6 L1264.8,1064.2 L1266.0,1063.6 L1267.2,1065.2 L1268.4,1064.8 L1269.6,1064.0 L1270.8,1064.6 L1272.0,1065.7 L1273.2,1063.8 L1274.4,1065.4 L1275.6,1064.6 L1276.8,1064.7 L1278.0,1065.4 L1279.2,1064.5 L1280.4,1064.7 L1281.6,1065.1 L1282.8,1065.8 L1284.0,1064.4 L1285.2,1065.4 L1286.4,1065.2 L1287.6,1065.0 L1288.8,1064.5 L1290.0,1064.4 L1291.2,1063.7 L1292.4,1063.9 L1293.6,1063.8 L1294.8,1065.2 L1296.0,1064.2 L1297.2,1064.0 L1298.4,1063.8 L1299.6,1065.5 L1300.8,1065.5 L1302.0,1065.1 L1303.2,1064.2 L1304.4,1064.1 L1305.6,1064.2 L1306.8,1064.6 L1308.0,1063.9 L1309.2,1064.6 L1310.4,1064.2 L1311.6,1065.7 L1312.8,1065.7 L1314.0,1064.8 L1315.2,1064.1 L1316.4,1065.7 L1317.6,1064.3 L1318.8,1064.4 L1320.0,1063.6 L1321.2,1064.4 L1322.4,1064.6 L1323.6,1064.7 L1324.8,1064.0 L1326.0,1064.7 L1327.2,1063.6 L1328.4,1064.2 L1329.6,1063.8 L1330.8,1064.5 L1332.0,1063.7 L1333.2,1063.6 L1334.4,1064.3 L1335.6,1064.1 L1336.8,1064.9 L1338.0,1064.8 L1339.2,1065.3 L1340.4,1065.0 L1341.6,1065.2 L1342.8,1065.5 L1344.0,1064.5 L1345.2,1064.3 L1346.4,1065.8 L1347.6,1063.9 L1348.8,1065.2 L1350.0,1065.0 L1351.2,1063.7 L1352.4,1065.4 L1353.6,1065.6 L1354.8,1065.0 L1356.0,1065.2 L1357.2,1065.4 L1358.4,1063.9 L1359.6,1064.8 L1360.8,1064.7 L1362.0,1065.4 L1363.2,1065.4 L1364.4,1065.4 L1365.6,1064.9 L1366.8,1065.6 L1368.0,1065.1 L1369.2,1065.1 L1370.4,1064.1 L1371.6,1063.7 L1372.8,1063.9 L1374.0,1064.4 L1375.2,1063.8 L1376.4,1065.4 L1377.6,1064.8 L1378.8,1065.0 L1380.0,1065.0 L1381.2,1065.1 L1382.4,1064.7 L1383.6,1063.6 L1384.8,1065.4 L1386.0,1065.2 L1387.2,1064.7 L1388.4,1064.8 L1389.6,1065.1 L1390.8,1063.7 L1392.0,1065.2 L1393.2,1064.2 L1394.4,1063.8 L1395.6,1064.2 L1396.8,1065.2 L1398.0,1064.1 L1399.2,1065.2 L1400.4,1065.7 L1401.6,1064.7 L1402.8,1064.4 L1404.0,1064.7 L1405.2,1065.1 L1406.4,1065.3 L1407.6,1065.0 L1408.8,1065.0 L1410.0,1063.8 L1411.2,1063.9 L1412.4,1064.2 L1413.6,1065.2 L1414.8,1064.3 L1416.0,1064.8 L1417.2,1063.6 L1418.4,1063.7 L1419.6,1064.2 L1420.8,1065.1 L1422.0,1065.1 L1423.2,1065.1 L1424.4,1064.2 L1425.6,1064.7 L1426.8,1064.6 L1428.0,1064.6 L1429.2,1063.9 L1430.4,1065.6 L1431.6,1064.0 L1432.8,1065.8 L1434.0,1065.7 L1435.2,1063.6 L1436.4,1064.6 L1437.6,1065.4 L1438.8,1065.7 L1440.0,1064.6 L1441.2,1064.2 L1442.4,1064.1 L1443.6,1065.7 L1444.8,1064.1 L1446.0,1065.0 L1447.2,1064.1 L1448.4,1065.0 L1449.6,1066.0 L1450.8,1064.3 L1452.0,1065.9 L1453.2,1065.3 L1454.4,1066.2 L1455.6,1065.9 L1456.8,1065.0 L1458.0,1066.5 L1459.2,1065.7 L1460.4,1064.8 L1461.6,1064.8 L1462.8,1066.0 L1464.0,1065.9 L1465.2,1065.7 L1466.4,1065.4 L1467.6,1066.0 L1468.8,1066.0 L1470.0,1067.2 L1471.2,1065.5 L1472.4,1067.2 L1473.6,1067.5 L1474.8,1066.0 L1476.0,1067.9 L1477.2,1067.5 L1478.4,1068.0 L1479.6,1066.7 L1480.8,1067.0 L1482.0,1067.1 L1483.2,1068.5 L1484.4,1067.7 L1485.6,1067.3 L1486.8,1067.5 L1488.0,1067.3 L1489.2,1066.9 L1490.4,1067.1 L1491.6,1068.8 L1492.8,1067.6" fill="none" stroke="#66666a" stroke-width="1"/>
</svg>
<div class="t" style="left:244.3px;top:148.10px;font-size:12.4px;font-weight:bold;color:#111">mW/m²/nm</div>
<div class="t" style="left:200px;width:81.5px;text-align:right;top:194.43px;font-size:11.6px;font-weight:bold;color:#111">25</div>
<div class="t" style="left:200px;width:81.5px;text-align:right;top:367.28px;font-size:11.6px;font-weight:bold;color:#111">20</div>
<div class="t" style="left:200px;width:81.5px;text-align:right;top:540.13px;font-size:11.6px;font-weight:bold;color:#111">15</div>
<div class="t" style="left:200px;width:81.5px;text-align:right;top:712.98px;font-size:11.6px;font-weight:bold;color:#111">10</div>
<div class="t" style="left:200px;width:81.5px;text-align:right;top:885.83px;font-size:11.6px;font-weight:bold;color:#111">5</div>
<div class="t" style="left:200px;width:81.5px;text-align:right;top:1058.68px;font-size:11.6px;font-weight:bold;color:#111">0</div>
<div class="t" style="left:315.8px;top:1075.18px;font-size:11.6px;transform:translateX(-50%);font-weight:bold;color:#111">200</div>
<div class="t" style="left:454.35px;top:1075.18px;font-size:11.6px;transform:translateX(-50%);font-weight:bold;color:#111">300</div>
<div class="t" style="left:592.9px;top:1075.18px;font-size:11.6px;transform:translateX(-50%);font-weight:bold;color:#111">400</div>
<div class="t" style="left:731.45px;top:1075.18px;font-size:11.6px;transform:translateX(-50%);font-weight:bold;color:#111">500</div>
<div class="t" style="left:870.0px;top:1075.18px;font-size:11.6px;transform:translateX(-50%);font-weight:bold;color:#111">600</div>
<div class="t" style="left:1008.55px;top:1075.18px;font-size:11.6px;transform:translateX(-50%);font-weight:bold;color:#111">700</div>
<div class="t" style="left:1147.1px;top:1075.18px;font-size:11.6px;transform:translateX(-50%);font-weight:bold;color:#111">800</div>
<div class="t" style="left:1285.65px;top:1075.18px;font-size:11.6px;transform:translateX(-50%);font-weight:bold;color:#111">900</div>
<div class="t" style="left:1424.1999999999998px;top:1075.18px;font-size:11.6px;transform:translateX(-50%);font-weight:bold;color:#111">1000</div>
<div class="t" style="left:1542px;top:1075.18px;font-size:11.6px;transform:translateX(-50%);font-weight:bold;color:#111">nm</div>
</body></html>
